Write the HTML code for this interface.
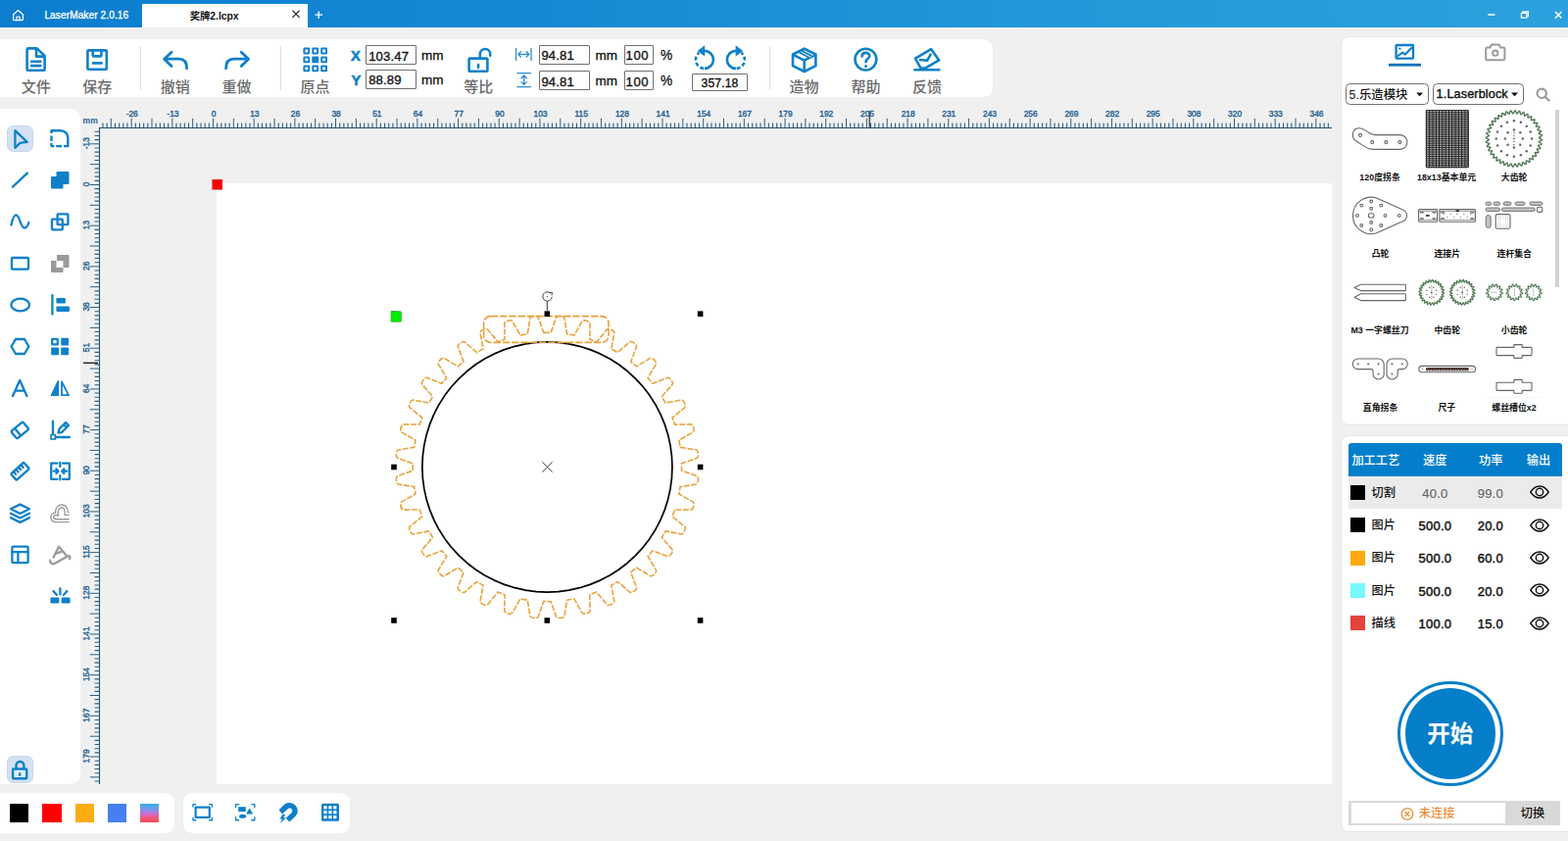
<!DOCTYPE html><html lang="zh"><head><meta charset="utf-8"><title>LaserMaker 2.0.16</title><style>
html,body{margin:0;padding:0}
body{width:1600px;height:858px;background:#f0f0f0;position:relative;overflow:hidden;font-family:"Liberation Sans",sans-serif;color:#000}
div,svg,span{position:absolute;box-sizing:border-box}
svg.t,svg.i{overflow:visible;display:block}
.tx{line-height:1.35;white-space:nowrap;overflow:visible;font-family:"Liberation Sans","Noto Sans CJK SC",sans-serif;font-weight:500}
#titlebar{left:0;top:0;width:1600px;height:28px;background:linear-gradient(90deg,#0c7dcf 0%,#1789d4 35%,#2499da 70%,#2ca1dd 100%)}
#tab{left:145px;top:4px;width:169px;height:24px;background:#fff}
#toolbar{left:0;top:40px;width:1012.8px;height:59px;background:#fff;border-radius:0 9.5px 9.5px 0}
.sep{width:1px;top:47px;height:45px;background:#dedede}
.inp{background:#fff;border:1px solid #707070;border-radius:1px;font-size:13.1px;line-height:1;color:#111;white-space:nowrap;-webkit-text-stroke:0.35px #111;letter-spacing:0.15px}
.inp span{position:absolute;top:4.2px}
.lbl{font-size:13.5px;line-height:1;color:#111;white-space:nowrap;-webkit-text-stroke:0.3px #111}
.xy{font-size:14.8px;font-weight:700;color:#0f80c8;line-height:1;-webkit-text-stroke:0.5px #0f80c8}
#leftbar{left:0;top:111px;width:81.8px;height:689.2px;background:#fff;border-radius:0 10px 10px 0}
#selbg{left:7px;top:127.6px;width:27px;height:27.2px;background:#d3e2f3;border:1px solid #c3d7ee;border-radius:6.5px}
#lockbg{left:7px;top:771.2px;width:27px;height:27.4px;background:#d3e2f3;border:1px solid #c3d7ee;border-radius:6.5px}
#page{left:221px;top:187px;width:1138px;height:613px;background:#fff}
#palette{left:0;top:809.2px;width:178.2px;height:40.8px;background:#fff;border-radius:0 9.5px 9.5px 0}
.sw{top:819.9px;width:19.2px;height:19.2px}
#btools{left:186.8px;top:809.2px;width:169.8px;height:40.8px;background:#fff;border-radius:9.5px}
#rp1{left:1369px;top:38.2px;width:232px;height:394.6px;background:#fff;border-radius:7px 0 0 7px;box-shadow:0 0 0 1px #e5e5e5}
#rp2{left:1369px;top:444.6px;width:232px;height:403.6px;background:#fff;border-radius:7px 0 0 7px;box-shadow:0 0 0 1px #e5e5e5}
.dd{top:85.2px;height:21.6px;border:1px solid #707070;border-radius:4.5px;background:#fff}
#thead{left:1376px;top:452px;width:217.8px;height:34px;background:#037ecb;border-radius:3px 3px 0 0}
#row1{left:1376px;top:486px;width:217.8px;height:32.8px;background:#ebebeb}
.csw{left:1378.2px;width:15px;height:15px}
.num{font-size:13px;line-height:1;color:#111;white-space:nowrap;transform:translateX(-50%);-webkit-text-stroke:0.45px #111;letter-spacing:0.2px}
#statusbar{left:1376.2px;top:817px;width:215.8px;height:25px;background:#d9d9d9}
#statusin{left:1378.6px;top:819.2px;width:157.4px;height:20.4px;background:#fff}
</style></head><body>
<div id="titlebar"></div><div id="tab"></div>
<svg class="i" style="left:10.6px;top:8.1px" width="15" height="15" viewBox="0 0 16 16"><path fill="none" stroke="#fff" stroke-width="1.3" stroke-linejoin="round" d="M2.8 7.2 L8 2.6 L13.2 7.2 V12.6 A0.8 0.8 0 0 1 12.4 13.4 H3.6 A0.8 0.8 0 0 1 2.8 12.6Z M6.4 13.2 V9.6 H9.6 V13.2"/></svg>
<span style="left:45.4px;top:11.4px;font-size:10.1px;line-height:1;color:#fff;white-space:nowrap;-webkit-text-stroke:0.3px #fff;letter-spacing:0.1px">LaserMaker 2.0.16</span>
<span class="tx" style="left:193.74px;top:10.00px;width:51.12px;height:13.91px;font-size:10.3px;color:#111;font-weight:700">奖牌2.lcpx</span>
<svg class="i" style="left:296px;top:8.4px" width="12" height="12" viewBox="0 0 12 12"><path stroke="#222" stroke-width="1.2" d="M2.4 2.6L9.6 9.8M9.6 2.6L2.4 9.8"/></svg>
<svg class="i" style="left:319px;top:9px" width="12" height="12" viewBox="0 0 12 12"><path stroke="#fff" stroke-width="1.3" d="M6.2 2.4V9.8M2.4 6.1H10"/></svg>
<svg class="i" style="left:1510px;top:6px" width="90" height="18" viewBox="1510 6 90 18"><path stroke="#fff" stroke-width="1.5" fill="none" d="M1518.2 15H1525.4"/><path stroke="#fff" stroke-width="1.2" fill="none" d="M1552.4 13.4H1557.8V18.2H1552.4ZM1554 13.2V11.8H1559.4V16.6H1558"/><path stroke="#fff" stroke-width="1.4" fill="none" d="M1587 12L1593.4 18.4M1593.4 12L1587 18.4"/></svg>
<div id="toolbar"></div>
<div class="sep" style="left:143px"></div>
<div class="sep" style="left:286px"></div>
<div class="sep" style="left:785.4px"></div>
<svg class="i" style="left:0;top:40px" width="1014" height="58" viewBox="0 40 1014 58"><path fill="none" stroke="#0f80c8" stroke-width="2.6" stroke-linecap="round" stroke-linejoin="round" d="M28.6 49.4 H37.6 L45.6 57 V70.8 A1 1 0 0 1 44.6 71.8 H28.6 A1 1 0 0 1 27.6 70.8 V50.4 A1 1 0 0 1 28.6 49.4 Z"/><path fill="none" stroke="#0f80c8" stroke-width="2.6" stroke-linecap="round" stroke-linejoin="round" stroke-width="2.4" d="M37 50 V57.6 H45"/><path fill="none" stroke="#0f80c8" stroke-width="2.6" stroke-linecap="round" stroke-linejoin="round" stroke-width="2.4" d="M32 62.7 H41.4 M32 67.1 H41.4"/><rect fill="none" stroke="#0f80c8" stroke-width="2.6" stroke-linecap="round" stroke-linejoin="round" x="89.4" y="51.4" width="19.4" height="19.4" rx="1"/><path fill="none" stroke="#0f80c8" stroke-width="2.6" stroke-linecap="round" stroke-linejoin="round" stroke-width="2.6" d="M94.7 52 V56.4 A1 1 0 0 0 95.7 57.4 H102.4 A1 1 0 0 0 103.4 56.4 V52"/><path fill="none" stroke="#0f80c8" stroke-width="2.6" stroke-linecap="round" stroke-linejoin="round" d="M95 64.4 H103.6"/><path fill="none" stroke="#0f80c8" stroke-width="2.8" stroke-linecap="round" stroke-linejoin="round" d="M175 53.2 L167.6 60.2 L175 67.6 M168.4 60.2 H182.6 C188 60.2 190.6 63.4 190.6 69.8"/><path fill="none" stroke="#0f80c8" stroke-width="2.8" stroke-linecap="round" stroke-linejoin="round" d="M246.2 53.2 L253.6 60.2 L246.2 67.6 M252.8 60.2 H238.6 C233.2 60.2 230.6 63.4 230.6 69.8"/><rect fill="none" stroke="#0f80c8" stroke-width="2" x="310.4" y="49.6" width="4.8" height="4.8" rx="0.3"/><rect fill="none" stroke="#0f80c8" stroke-width="2" x="319.3" y="49.6" width="4.8" height="4.8" rx="0.3"/><rect fill="none" stroke="#0f80c8" stroke-width="2" x="328.2" y="49.6" width="4.8" height="4.8" rx="0.3"/><rect fill="none" stroke="#0f80c8" stroke-width="2" x="310.4" y="58.5" width="4.8" height="4.8" rx="0.3"/><rect fill="#0f80c8" x="318.3" y="57.5" width="6.8" height="6.8" rx="0.5"/><rect fill="none" stroke="#0f80c8" stroke-width="2" x="328.2" y="58.5" width="4.8" height="4.8" rx="0.3"/><rect fill="none" stroke="#0f80c8" stroke-width="2" x="310.4" y="67.4" width="4.8" height="4.8" rx="0.3"/><rect fill="none" stroke="#0f80c8" stroke-width="2" x="319.3" y="67.4" width="4.8" height="4.8" rx="0.3"/><rect fill="none" stroke="#0f80c8" stroke-width="2" x="328.2" y="67.4" width="4.8" height="4.8" rx="0.3"/><rect fill="none" stroke="#0f80c8" stroke-width="2.6" stroke-linecap="round" stroke-linejoin="round" x="478.6" y="59.6" width="18.8" height="13.2" rx="0.8"/><path fill="none" stroke="#0f80c8" stroke-width="2.6" stroke-linecap="round" stroke-linejoin="round" d="M489.8 59 V55 A5.2 5.2 0 0 1 500.2 55.4 V56.8"/><path fill="none" stroke="#0f80c8" stroke-width="2.6" stroke-linecap="round" stroke-linejoin="round" stroke-width="2.4" d="M488 66 V69"/><path fill="none" stroke="#2b8ccb" stroke-width="1.3" stroke-linecap="round" stroke-linejoin="round" d="M526.5 49.4 V61.4 M542 49.4 V61.4 M528.8 55.4 H539.8 M531.4 52.8 L528.8 55.4 L531.4 58 M537.2 52.8 L539.8 55.4 L537.2 58"/><path fill="none" stroke="#2b8ccb" stroke-width="1.3" stroke-linecap="round" stroke-linejoin="round" d="M528 74.7 H541.4 M528 88.6 H541.4 M534.7 77 V86.4 M532 79.8 L534.7 77 L537.4 79.8 M532 83.6 L534.7 86.4 L537.4 83.6"/><path fill="none" stroke="#0f80c8" stroke-width="2.6" d="M718.90 51.90 A9.0 9.0 0 0 1 718.90 69.90"/><path fill="none" stroke="#0f80c8" stroke-width="2.6" stroke-dasharray="3.9 2.3" d="M718.12 69.87 A9.0 9.0 0 0 1 713.36 53.81"/><path fill="#0f80c8" d="M719.1999999999999 46.2 V57.4 L711.6 52 Z"/><path fill="none" stroke="#0f80c8" stroke-width="2.6" d="M750.90 51.90 A9.0 9.0 0 0 0 750.90 69.90"/><path fill="none" stroke="#0f80c8" stroke-width="2.6" stroke-dasharray="3.9 2.3" d="M751.68 69.87 A9.0 9.0 0 0 0 756.44 53.81"/><path fill="#0f80c8" d="M750.6 46.2 V57.4 L758.2 52 Z"/><path fill="none" stroke="#0f80c8" stroke-width="2.6" stroke-linecap="round" stroke-linejoin="round" d="M820.7 49.6 L832.4 55.5 V67.2 L820.7 73 L809 67.2 V55.5 Z M809.4 55.8 L820.7 61.6 L832 55.8 M820.7 61.8 V72.6"/><path fill="none" stroke="#0f80c8" stroke-width="2.2" stroke-linecap="round" d="M814.6 52.8 L826.4 58.8"/><path fill="#0f80c8" d="M815.6 52.4 L820.7 49.8 L831.4 55.2 L826.6 57.8 Z"/><path fill="none" stroke="#fff" stroke-width="1" d="M817.4 53 L827.4 58.2 M820.4 51.6 L830 56.4"/><circle fill="none" stroke="#0f80c8" stroke-width="2.6" stroke-linecap="round" stroke-linejoin="round" cx="883.4" cy="60.6" r="10.9"/><path fill="none" stroke="#0f80c8" stroke-width="2.6" stroke-linecap="round" stroke-linejoin="round" stroke-width="2.4" d="M879.6 57.4 C879.6 52.6 887.4 52.8 887.2 57.2 C887.1 59.8 883.6 60 883.5 63.2"/><circle fill="#0f80c8" cx="883.5" cy="67.4" r="1.5"/><path fill="none" stroke="#0f80c8" stroke-width="2.6" stroke-linecap="round" stroke-linejoin="round" d="M933.4 71.3 H958.2"/><path fill="none" stroke="#0f80c8" stroke-width="2.6" stroke-linecap="round" stroke-linejoin="round" d="M934 59.6 L950.2 50.2 L958.2 61.4 L944 69.6 L939.6 69.6 Z"/><path fill="none" stroke="#0f80c8" stroke-width="2.6" stroke-linecap="round" stroke-linejoin="round" stroke-width="2.2" d="M939 61 L946 61.8 L949.6 55.6"/></svg>
<span class="tx" style="left:21.80px;top:78.60px;width:30.00px;height:20.25px;font-size:15px;color:#6a6a6a">文件</span>
<span class="tx" style="left:84.20px;top:78.60px;width:30.00px;height:20.25px;font-size:15px;color:#6a6a6a">保存</span>
<span class="tx" style="left:163.80px;top:78.60px;width:30.00px;height:20.25px;font-size:15px;color:#6a6a6a">撤销</span>
<span class="tx" style="left:226.60px;top:78.60px;width:30.00px;height:20.25px;font-size:15px;color:#6a6a6a">重做</span>
<span class="tx" style="left:306.60px;top:78.60px;width:30.00px;height:20.25px;font-size:15px;color:#6a6a6a">原点</span>
<span class="tx" style="left:473.20px;top:78.60px;width:30.00px;height:20.25px;font-size:15px;color:#6a6a6a">等比</span>
<span class="tx" style="left:805.60px;top:78.60px;width:30.00px;height:20.25px;font-size:15px;color:#6a6a6a">造物</span>
<span class="tx" style="left:868.40px;top:78.60px;width:30.00px;height:20.25px;font-size:15px;color:#6a6a6a">帮助</span>
<span class="tx" style="left:931.00px;top:78.60px;width:30.00px;height:20.25px;font-size:15px;color:#6a6a6a">反馈</span>
<span class="xy" style="left:358px;top:50.1px">X</span><span class="xy" style="left:358.4px;top:74.7px">Y</span>
<div class="inp" style="left:373px;top:46px;width:52px;height:20px"><span style="left:2.2px;top:3.5px">103.47</span></div>
<div class="inp" style="left:373px;top:71px;width:52px;height:20px"><span style="left:2.2px;top:3.1px">88.89</span></div>
<span class="lbl" style="left:430px;top:50.2px">mm</span><span class="lbl" style="left:430px;top:75px">mm</span>
<div class="inp" style="left:550px;top:46px;width:52px;height:19.6px"><span style="left:1.4px;top:3.4px">94.81</span></div>
<div class="inp" style="left:550px;top:72px;width:52px;height:19.6px"><span style="left:1.4px;top:3.7px">94.81</span></div>
<span class="lbl" style="left:607.4px;top:50.2px">mm</span><span class="lbl" style="left:607.4px;top:76px">mm</span>
<div class="inp" style="left:636.8px;top:46px;width:30.6px;height:19.6px"><span style="left:0.8px;top:3.4px;letter-spacing:0.6px">100</span></div>
<div class="inp" style="left:636.8px;top:72px;width:30.6px;height:19.6px"><span style="left:0.8px;top:3.7px;letter-spacing:0.6px">100</span></div>
<span class="lbl" style="left:673.6px;top:48.4px;font-size:15.2px;transform:scaleX(0.9);transform-origin:0 0">%</span><span class="lbl" style="left:673.6px;top:74.2px;font-size:15.2px;transform:scaleX(0.9);transform-origin:0 0">%</span>
<div class="inp" style="left:706px;top:75.4px;width:57px;height:17.4px;font-size:12.2px;letter-spacing:0.1px"><span style="left:0;width:100%;text-align:center;top:2.6px">357.18</span></div>
<div id="leftbar"></div><div id="selbg"></div><div id="lockbg"></div>
<svg class="i" style="left:0;top:0" width="82" height="640" viewBox="0 0 82 640"><path fill="none" stroke="#0f80c8" stroke-width="2.3" stroke-linecap="round" stroke-linejoin="round" d="M15.4 133.2 L15.4 150.8 L20.2 146.2 Q20.8 145.7 21.6 145.6 L27.6 144.9 Z"/><path fill="none" stroke="#0f80c8" stroke-width="2.3" stroke-linecap="round" stroke-linejoin="round" d="M13 190.6 L27.8 176.6"/><path fill="none" stroke="#0f80c8" stroke-width="2.3" stroke-linecap="round" stroke-linejoin="round" d="M11.5 229.5 C13 222 14.5 219.3 16.5 219.3 C20 219.3 21 232.5 25 232.5 C27 232.5 28.5 230 29.4 227"/><rect fill="none" stroke="#0f80c8" stroke-width="2.3" stroke-linecap="round" stroke-linejoin="round" x="12" y="263" width="17" height="11.6" rx="0.8"/><ellipse fill="none" stroke="#0f80c8" stroke-width="2.3" stroke-linecap="round" stroke-linejoin="round" cx="20.7" cy="311" rx="9.3" ry="6.4"/><path fill="none" stroke="#0f80c8" stroke-width="2.3" stroke-linecap="round" stroke-linejoin="round" d="M11.6 353.5 L16 346 L25 346 L29.4 353.5 L25 361 L16 361 Z"/><path fill="none" stroke="#0f80c8" stroke-width="2.3" stroke-linecap="round" stroke-linejoin="round" d="M13 404 L20.2 388 L27.4 404 M15.6 398.6 L24.8 398.6"/><g transform="translate(20.3 439) rotate(-40)"><rect fill="none" stroke="#0f80c8" stroke-width="2.3" stroke-linecap="round" stroke-linejoin="round" x="-7.8" y="-4.9" width="15.6" height="9.8" rx="1.6"/><path fill="none" stroke="#0f80c8" stroke-width="2.3" stroke-linecap="round" stroke-linejoin="round" stroke-width="2" d="M-2.8 -4.5 V4.5"/></g><g transform="translate(20.5 480.8) rotate(-42)"><rect fill="none" stroke="#0f80c8" stroke-width="2.3" stroke-linecap="round" stroke-linejoin="round" x="-8.8" y="-4.3" width="17.6" height="8.6" rx="1"/><path fill="none" stroke="#0f80c8" stroke-width="2.3" stroke-linecap="round" stroke-linejoin="round" stroke-width="1.4" d="M-5.2 -4 V-0.8 M-1.8 -4 V-0.8 M1.6 -4 V-0.8 M5 -4 V-0.8"/></g><path fill="none" stroke="#0f80c8" stroke-width="2.3" stroke-linecap="round" stroke-linejoin="round" d="M20.5 514.6 L30 519.3 L20.5 524 L11 519.3 Z"/><path fill="none" stroke="#0f80c8" stroke-width="2.3" stroke-linecap="round" stroke-linejoin="round" d="M11 523.8 L20.5 528.5 L30 523.8 M11 528.2 L20.5 532.9 L30 528.2"/><rect fill="none" stroke="#0f80c8" stroke-width="2.3" stroke-linecap="round" stroke-linejoin="round" x="12.4" y="557.6" width="16.2" height="16.6" rx="1"/><path fill="none" stroke="#0f80c8" stroke-width="2.3" stroke-linecap="round" stroke-linejoin="round" d="M12.4 563.2 H28.6 M18.4 563.2 V574.2"/><path fill="none" stroke="#0f80c8" stroke-width="2.4" stroke-linejoin="round" d="M52.5 136 V133.2 H61.5 C66.5 133.2 69.3 136.5 69.3 141 V149.1 H65 M52.5 138.4 V144 M52.5 146 V149.1 H55.4 M57.2 149.1 H63.2"/><path fill="#0f80c8" d="M58.5 175 H69.5 A1 1 0 0 1 70.5 176 V187 A1 1 0 0 1 69.5 188 H64.5 V191.5 A1 1 0 0 1 63.5 192.5 H53 A1 1 0 0 1 52 191.5 V181 A1 1 0 0 1 53 180 H57.5 V176 A1 1 0 0 1 58.5 175 Z"/><rect fill="none" stroke="#0f80c8" stroke-width="2.3" stroke-linecap="round" stroke-linejoin="round" x="58.6" y="218.4" width="10.8" height="10.8" rx="0.8"/><rect fill="none" stroke="#0f80c8" stroke-width="2.3" stroke-linecap="round" stroke-linejoin="round" x="53" y="223.6" width="10.8" height="10.8" rx="0.8" /><path fill="#9a9a9a" d="M58 260 H69.5 A1 1 0 0 1 70.5 261 V272 A1 1 0 0 1 69.5 273 H64.5 V266 H58 Z"/><path fill="#9a9a9a" d="M52 266 H57.5 V273 H64.5 V277 A1 1 0 0 1 63.5 278 H53 A1 1 0 0 1 52 277 Z"/><path fill="none" stroke="#0f80c8" stroke-width="2.3" stroke-linecap="round" stroke-linejoin="round" d="M53.4 301.2 V320.6"/><rect fill="#0f80c8" x="57.4" y="304" width="9.4" height="5.6" rx="1.2"/><rect fill="#0f80c8" x="57.4" y="312.4" width="13.6" height="5.6" rx="1.2"/><rect fill="none" stroke="#0f80c8" stroke-width="2.3" stroke-linecap="round" stroke-linejoin="round" x="53.2" y="345.8" width="5.6" height="5.6" rx="0.5"/><rect fill="#0f80c8" x="62.2" y="344.8" width="7.8" height="7.6" rx="1"/><rect fill="#0f80c8" x="52.2" y="354.6" width="7.8" height="7.6" rx="1"/><rect fill="#0f80c8" x="62.2" y="354.6" width="7.8" height="7.6" rx="1"/><path fill="#0f80c8" stroke="#0f80c8" stroke-width="1.4" stroke-linejoin="round" d="M59.4 388.6 V403.4 H52.4 Z"/><path fill="none" stroke="#0f80c8" stroke-width="1.8" stroke-linejoin="round" d="M63 389.4 V403.2 H70 Z"/><path fill="none" stroke="#0f80c8" stroke-width="2.3" stroke-linecap="round" stroke-linejoin="round" d="M54 429.6 V446 H71"/><rect fill="#fff" stroke="#0f80c8" stroke-width="1.6" x="52" y="443.6" width="4.4" height="4.4"/><path fill="none" stroke="#0f80c8" stroke-width="2.3" stroke-linecap="round" stroke-linejoin="round" d="M59.6 441.6 L60.4 437.6 L67 431 L70 434 L63.4 440.8 Z M65 433 L68 436"/><path fill="none" stroke="#0f80c8" stroke-width="2.3" stroke-linecap="round" stroke-linejoin="round" d="M58.4 472.6 H52.2 V488.8 H58.4 M64 472.6 H70.8 V488.8 H64"/><path fill="none" stroke="#0f80c8" stroke-width="2.3" stroke-linecap="round" stroke-linejoin="round" stroke-width="1.5" d="M61.3 472 V476 M61.3 485.4 V489.4 M54.6 480.7 H59.4 M57.4 478.4 L59.6 480.7 L57.4 483 M68.2 480.7 H63.4 M65.4 478.4 L63.2 480.7 L65.4 483"/><path fill="none" stroke="#9a9a9a" stroke-width="1.4" stroke-linejoin="round" d="M70.6 532.6 H57 C53.8 532.6 51.8 530.4 51.8 527.8 C51.8 525 54 523.2 56.6 523.2 C56.2 518.6 59.2 515 62.8 515 C66.6 515 69.4 518 69.2 522.6 H70.6"/><path fill="none" stroke="#9a9a9a" stroke-width="1.4" stroke-linejoin="round" d="M70.6 529.8 H57.4 C55.6 529.8 54.6 528.8 54.6 527.6 C54.6 526.2 55.8 525.4 57.2 525.6 L59.4 526 C58.6 521.6 60.2 517.8 62.8 517.8 C65.4 517.8 67 520.8 66 525.4 H70.6"/><path fill="none" stroke="#9a9a9a" stroke-width="2.3" stroke-linecap="round" stroke-linejoin="round" stroke-width="1.7" d="M54.6 568.6 L60 557.8 L67.6 566.4 M56.6 564.8 L64 562.4"/><path fill="none" stroke="#9a9a9a" stroke-width="2.3" stroke-linecap="round" stroke-linejoin="round" stroke-width="1.7" d="M51.2 571.6 C51 575.4 54.2 576 56.6 574.6 L68.4 567.8 C70.8 566.4 72.4 568 71 570.2"/><rect fill="#0f80c8" x="51.4" y="609.6" width="9" height="6" rx="1.4"/><rect fill="#0f80c8" x="62.6" y="609.6" width="9" height="6" rx="1.4"/><path fill="none" stroke="#0f80c8" stroke-width="2.3" stroke-linecap="round" stroke-linejoin="round" d="M61.4 600.4 V606.4 M54.4 603 L58 607 M68.4 603 L64.8 607"/></svg>
<svg class="i" style="left:7px;top:771px" width="27" height="28" viewBox="7 771 27 28"><rect fill="#e2f0fb" stroke="#0f80c8" stroke-width="2.4" stroke-linejoin="round" x="13.1" y="784.5" width="14.1" height="9.8" rx="0.8"/><path fill="none" stroke="#0f80c8" stroke-width="2.4" d="M16.5 784V781A3.95 3.95 0 0 1 24.4 781V784"/><path stroke="#0f80c8" stroke-width="2.2" stroke-linecap="round" d="M20.2 789V791"/></svg>
<div id="page"></div>
<svg class="i" style="left:0;top:100px" width="1362" height="702" viewBox="0 100 1362 702"><g font-family="Liberation Sans, sans-serif" font-size="8.4" font-weight="400" fill="#2b6696" stroke="#2b6696" stroke-width="0.42"><path stroke="#2d5f82" stroke-width="1" fill="none" d="M113.30 120.8V130.5M134.14 120.8V130.5M154.98 120.8V130.5M175.82 120.8V130.5M196.66 120.8V130.5M217.50 120.8V130.5M238.34 120.8V130.5M259.18 120.8V130.5M280.02 120.8V130.5M300.86 120.8V130.5M321.70 120.8V130.5M342.54 120.8V130.5M363.38 120.8V130.5M384.22 120.8V130.5M405.06 120.8V130.5M425.90 120.8V130.5M446.74 120.8V130.5M467.58 120.8V130.5M488.42 120.8V130.5M509.26 120.8V130.5M530.10 120.8V130.5M550.94 120.8V130.5M571.78 120.8V130.5M592.62 120.8V130.5M613.46 120.8V130.5M634.30 120.8V130.5M655.14 120.8V130.5M675.98 120.8V130.5M696.82 120.8V130.5M717.66 120.8V130.5M738.50 120.8V130.5M759.34 120.8V130.5M780.18 120.8V130.5M801.02 120.8V130.5M821.86 120.8V130.5M842.70 120.8V130.5M863.54 120.8V130.5M884.38 120.8V130.5M905.22 120.8V130.5M926.06 120.8V130.5M946.90 120.8V130.5M967.74 120.8V130.5M988.58 120.8V130.5M1009.42 120.8V130.5M1030.26 120.8V130.5M1051.10 120.8V130.5M1071.94 120.8V130.5M1092.78 120.8V130.5M1113.62 120.8V130.5M1134.46 120.8V130.5M1155.30 120.8V130.5M1176.14 120.8V130.5M1196.98 120.8V130.5M1217.82 120.8V130.5M1238.66 120.8V130.5M1259.50 120.8V130.5M1280.34 120.8V130.5M1301.18 120.8V130.5M1322.02 120.8V130.5M1342.86 120.8V130.5"/><path stroke="#2d5f82" stroke-width="1.1" fill="none" d="M104.96 125.6V130.5M109.13 125.6V130.5M117.47 125.6V130.5M121.64 125.6V130.5M125.80 125.6V130.5M129.97 125.6V130.5M138.31 125.6V130.5M142.48 125.6V130.5M146.64 125.6V130.5M150.81 125.6V130.5M159.15 125.6V130.5M163.32 125.6V130.5M167.48 125.6V130.5M171.65 125.6V130.5M179.99 125.6V130.5M184.16 125.6V130.5M188.32 125.6V130.5M192.49 125.6V130.5M200.83 125.6V130.5M205.00 125.6V130.5M209.16 125.6V130.5M213.33 125.6V130.5M221.67 125.6V130.5M225.84 125.6V130.5M230.00 125.6V130.5M234.17 125.6V130.5M242.51 125.6V130.5M246.68 125.6V130.5M250.84 125.6V130.5M255.01 125.6V130.5M263.35 125.6V130.5M267.52 125.6V130.5M271.68 125.6V130.5M275.85 125.6V130.5M284.19 125.6V130.5M288.36 125.6V130.5M292.52 125.6V130.5M296.69 125.6V130.5M305.03 125.6V130.5M309.20 125.6V130.5M313.36 125.6V130.5M317.53 125.6V130.5M325.87 125.6V130.5M330.04 125.6V130.5M334.20 125.6V130.5M338.37 125.6V130.5M346.71 125.6V130.5M350.88 125.6V130.5M355.04 125.6V130.5M359.21 125.6V130.5M367.55 125.6V130.5M371.72 125.6V130.5M375.88 125.6V130.5M380.05 125.6V130.5M388.39 125.6V130.5M392.56 125.6V130.5M396.72 125.6V130.5M400.89 125.6V130.5M409.23 125.6V130.5M413.40 125.6V130.5M417.56 125.6V130.5M421.73 125.6V130.5M430.07 125.6V130.5M434.24 125.6V130.5M438.40 125.6V130.5M442.57 125.6V130.5M450.91 125.6V130.5M455.08 125.6V130.5M459.24 125.6V130.5M463.41 125.6V130.5M471.75 125.6V130.5M475.92 125.6V130.5M480.08 125.6V130.5M484.25 125.6V130.5M492.59 125.6V130.5M496.76 125.6V130.5M500.92 125.6V130.5M505.09 125.6V130.5M513.43 125.6V130.5M517.60 125.6V130.5M521.76 125.6V130.5M525.93 125.6V130.5M534.27 125.6V130.5M538.44 125.6V130.5M542.60 125.6V130.5M546.77 125.6V130.5M555.11 125.6V130.5M559.28 125.6V130.5M563.44 125.6V130.5M567.61 125.6V130.5M575.95 125.6V130.5M580.12 125.6V130.5M584.28 125.6V130.5M588.45 125.6V130.5M596.79 125.6V130.5M600.96 125.6V130.5M605.12 125.6V130.5M609.29 125.6V130.5M617.63 125.6V130.5M621.80 125.6V130.5M625.96 125.6V130.5M630.13 125.6V130.5M638.47 125.6V130.5M642.64 125.6V130.5M646.80 125.6V130.5M650.97 125.6V130.5M659.31 125.6V130.5M663.48 125.6V130.5M667.64 125.6V130.5M671.81 125.6V130.5M680.15 125.6V130.5M684.32 125.6V130.5M688.48 125.6V130.5M692.65 125.6V130.5M700.99 125.6V130.5M705.16 125.6V130.5M709.32 125.6V130.5M713.49 125.6V130.5M721.83 125.6V130.5M726.00 125.6V130.5M730.16 125.6V130.5M734.33 125.6V130.5M742.67 125.6V130.5M746.84 125.6V130.5M751.00 125.6V130.5M755.17 125.6V130.5M763.51 125.6V130.5M767.68 125.6V130.5M771.84 125.6V130.5M776.01 125.6V130.5M784.35 125.6V130.5M788.52 125.6V130.5M792.68 125.6V130.5M796.85 125.6V130.5M805.19 125.6V130.5M809.36 125.6V130.5M813.52 125.6V130.5M817.69 125.6V130.5M826.03 125.6V130.5M830.20 125.6V130.5M834.36 125.6V130.5M838.53 125.6V130.5M846.87 125.6V130.5M851.04 125.6V130.5M855.20 125.6V130.5M859.37 125.6V130.5M867.71 125.6V130.5M871.88 125.6V130.5M876.04 125.6V130.5M880.21 125.6V130.5M888.55 125.6V130.5M892.72 125.6V130.5M896.88 125.6V130.5M901.05 125.6V130.5M909.39 125.6V130.5M913.56 125.6V130.5M917.72 125.6V130.5M921.89 125.6V130.5M930.23 125.6V130.5M934.40 125.6V130.5M938.56 125.6V130.5M942.73 125.6V130.5M951.07 125.6V130.5M955.24 125.6V130.5M959.40 125.6V130.5M963.57 125.6V130.5M971.91 125.6V130.5M976.08 125.6V130.5M980.24 125.6V130.5M984.41 125.6V130.5M992.75 125.6V130.5M996.92 125.6V130.5M1001.08 125.6V130.5M1005.25 125.6V130.5M1013.59 125.6V130.5M1017.76 125.6V130.5M1021.92 125.6V130.5M1026.09 125.6V130.5M1034.43 125.6V130.5M1038.60 125.6V130.5M1042.76 125.6V130.5M1046.93 125.6V130.5M1055.27 125.6V130.5M1059.44 125.6V130.5M1063.60 125.6V130.5M1067.77 125.6V130.5M1076.11 125.6V130.5M1080.28 125.6V130.5M1084.44 125.6V130.5M1088.61 125.6V130.5M1096.95 125.6V130.5M1101.12 125.6V130.5M1105.28 125.6V130.5M1109.45 125.6V130.5M1117.79 125.6V130.5M1121.96 125.6V130.5M1126.12 125.6V130.5M1130.29 125.6V130.5M1138.63 125.6V130.5M1142.80 125.6V130.5M1146.96 125.6V130.5M1151.13 125.6V130.5M1159.47 125.6V130.5M1163.64 125.6V130.5M1167.80 125.6V130.5M1171.97 125.6V130.5M1180.31 125.6V130.5M1184.48 125.6V130.5M1188.64 125.6V130.5M1192.81 125.6V130.5M1201.15 125.6V130.5M1205.32 125.6V130.5M1209.48 125.6V130.5M1213.65 125.6V130.5M1221.99 125.6V130.5M1226.16 125.6V130.5M1230.32 125.6V130.5M1234.49 125.6V130.5M1242.83 125.6V130.5M1247.00 125.6V130.5M1251.16 125.6V130.5M1255.33 125.6V130.5M1263.67 125.6V130.5M1267.84 125.6V130.5M1272.00 125.6V130.5M1276.17 125.6V130.5M1284.51 125.6V130.5M1288.68 125.6V130.5M1292.84 125.6V130.5M1297.01 125.6V130.5M1305.35 125.6V130.5M1309.52 125.6V130.5M1313.68 125.6V130.5M1317.85 125.6V130.5M1326.19 125.6V130.5M1330.36 125.6V130.5M1334.52 125.6V130.5M1338.69 125.6V130.5M1347.03 125.6V130.5M1351.20 125.6V130.5M1355.36 125.6V130.5"/><path stroke="#2d5f82" stroke-width="1" fill="none" d="M91.8 146.82H101.5M91.8 167.66H101.5M91.8 188.50H101.5M91.8 209.34H101.5M91.8 230.18H101.5M91.8 251.02H101.5M91.8 271.86H101.5M91.8 292.70H101.5M91.8 313.54H101.5M91.8 334.38H101.5M91.8 355.22H101.5M91.8 376.06H101.5M91.8 396.90H101.5M91.8 417.74H101.5M91.8 438.58H101.5M91.8 459.42H101.5M91.8 480.26H101.5M91.8 501.10H101.5M91.8 521.94H101.5M91.8 542.78H101.5M91.8 563.62H101.5M91.8 584.46H101.5M91.8 605.30H101.5M91.8 626.14H101.5M91.8 646.98H101.5M91.8 667.82H101.5M91.8 688.66H101.5M91.8 709.50H101.5M91.8 730.34H101.5M91.8 751.18H101.5M91.8 772.02H101.5M91.8 792.86H101.5"/><path stroke="#2d5f82" stroke-width="1.1" fill="none" d="M96.6 134.32H101.5M96.6 138.48H101.5M96.6 142.65H101.5M96.6 150.99H101.5M96.6 155.16H101.5M96.6 159.32H101.5M96.6 163.49H101.5M96.6 171.83H101.5M96.6 176.00H101.5M96.6 180.16H101.5M96.6 184.33H101.5M96.6 192.67H101.5M96.6 196.84H101.5M96.6 201.00H101.5M96.6 205.17H101.5M96.6 213.51H101.5M96.6 217.68H101.5M96.6 221.84H101.5M96.6 226.01H101.5M96.6 234.35H101.5M96.6 238.52H101.5M96.6 242.68H101.5M96.6 246.85H101.5M96.6 255.19H101.5M96.6 259.36H101.5M96.6 263.52H101.5M96.6 267.69H101.5M96.6 276.03H101.5M96.6 280.20H101.5M96.6 284.36H101.5M96.6 288.53H101.5M96.6 296.87H101.5M96.6 301.04H101.5M96.6 305.20H101.5M96.6 309.37H101.5M96.6 317.71H101.5M96.6 321.88H101.5M96.6 326.04H101.5M96.6 330.21H101.5M96.6 338.55H101.5M96.6 342.72H101.5M96.6 346.88H101.5M96.6 351.05H101.5M96.6 359.39H101.5M96.6 363.56H101.5M96.6 367.72H101.5M96.6 371.89H101.5M96.6 380.23H101.5M96.6 384.40H101.5M96.6 388.56H101.5M96.6 392.73H101.5M96.6 401.07H101.5M96.6 405.24H101.5M96.6 409.40H101.5M96.6 413.57H101.5M96.6 421.91H101.5M96.6 426.08H101.5M96.6 430.24H101.5M96.6 434.41H101.5M96.6 442.75H101.5M96.6 446.92H101.5M96.6 451.08H101.5M96.6 455.25H101.5M96.6 463.59H101.5M96.6 467.76H101.5M96.6 471.92H101.5M96.6 476.09H101.5M96.6 484.43H101.5M96.6 488.60H101.5M96.6 492.76H101.5M96.6 496.93H101.5M96.6 505.27H101.5M96.6 509.44H101.5M96.6 513.60H101.5M96.6 517.77H101.5M96.6 526.11H101.5M96.6 530.28H101.5M96.6 534.44H101.5M96.6 538.61H101.5M96.6 546.95H101.5M96.6 551.12H101.5M96.6 555.28H101.5M96.6 559.45H101.5M96.6 567.79H101.5M96.6 571.96H101.5M96.6 576.12H101.5M96.6 580.29H101.5M96.6 588.63H101.5M96.6 592.80H101.5M96.6 596.96H101.5M96.6 601.13H101.5M96.6 609.47H101.5M96.6 613.64H101.5M96.6 617.80H101.5M96.6 621.97H101.5M96.6 630.31H101.5M96.6 634.48H101.5M96.6 638.64H101.5M96.6 642.81H101.5M96.6 651.15H101.5M96.6 655.32H101.5M96.6 659.48H101.5M96.6 663.65H101.5M96.6 671.99H101.5M96.6 676.16H101.5M96.6 680.32H101.5M96.6 684.49H101.5M96.6 692.83H101.5M96.6 697.00H101.5M96.6 701.16H101.5M96.6 705.33H101.5M96.6 713.67H101.5M96.6 717.84H101.5M96.6 722.00H101.5M96.6 726.17H101.5M96.6 734.51H101.5M96.6 738.68H101.5M96.6 742.84H101.5M96.6 747.01H101.5M96.6 755.35H101.5M96.6 759.52H101.5M96.6 763.68H101.5M96.6 767.85H101.5M96.6 776.19H101.5M96.6 780.36H101.5M96.6 784.52H101.5M96.6 788.69H101.5M96.6 797.03H101.5"/><path stroke="#274f6c" stroke-width="1.1" fill="none" d="M101.5 800V130.5H1359"/><path stroke="#dceef7" stroke-width="0.8" fill="none" d="M102.6 800V131.6H1359"/><text x="134.7" y="118.8" text-anchor="middle">-26</text><text x="176.4" y="118.8" text-anchor="middle">-13</text><text x="218.1" y="118.8" text-anchor="middle">0</text><text x="259.8" y="118.8" text-anchor="middle">13</text><text x="301.5" y="118.8" text-anchor="middle">26</text><text x="343.1" y="118.8" text-anchor="middle">38</text><text x="384.8" y="118.8" text-anchor="middle">51</text><text x="426.5" y="118.8" text-anchor="middle">64</text><text x="468.2" y="118.8" text-anchor="middle">77</text><text x="509.9" y="118.8" text-anchor="middle">90</text><text x="551.5" y="118.8" text-anchor="middle">103</text><text x="593.2" y="118.8" text-anchor="middle">115</text><text x="634.9" y="118.8" text-anchor="middle">128</text><text x="676.6" y="118.8" text-anchor="middle">141</text><text x="718.3" y="118.8" text-anchor="middle">154</text><text x="759.9" y="118.8" text-anchor="middle">167</text><text x="801.6" y="118.8" text-anchor="middle">179</text><text x="843.3" y="118.8" text-anchor="middle">192</text><text x="885.0" y="118.8" text-anchor="middle">205</text><text x="926.7" y="118.8" text-anchor="middle">218</text><text x="968.3" y="118.8" text-anchor="middle">231</text><text x="1010.0" y="118.8" text-anchor="middle">243</text><text x="1051.7" y="118.8" text-anchor="middle">256</text><text x="1093.4" y="118.8" text-anchor="middle">269</text><text x="1135.1" y="118.8" text-anchor="middle">282</text><text x="1176.7" y="118.8" text-anchor="middle">295</text><text x="1218.4" y="118.8" text-anchor="middle">308</text><text x="1260.1" y="118.8" text-anchor="middle">320</text><text x="1301.8" y="118.8" text-anchor="middle">333</text><text x="1343.5" y="118.8" text-anchor="middle">346</text><text transform="translate(90.6 146.2) rotate(-90)" text-anchor="middle">-13</text><text transform="translate(90.6 187.9) rotate(-90)" text-anchor="middle">0</text><text transform="translate(90.6 229.6) rotate(-90)" text-anchor="middle">13</text><text transform="translate(90.6 271.3) rotate(-90)" text-anchor="middle">26</text><text transform="translate(90.6 312.9) rotate(-90)" text-anchor="middle">38</text><text transform="translate(90.6 354.6) rotate(-90)" text-anchor="middle">51</text><text transform="translate(90.6 396.3) rotate(-90)" text-anchor="middle">64</text><text transform="translate(90.6 438.0) rotate(-90)" text-anchor="middle">77</text><text transform="translate(90.6 479.7) rotate(-90)" text-anchor="middle">90</text><text transform="translate(90.6 521.3) rotate(-90)" text-anchor="middle">103</text><text transform="translate(90.6 563.0) rotate(-90)" text-anchor="middle">115</text><text transform="translate(90.6 604.7) rotate(-90)" text-anchor="middle">128</text><text transform="translate(90.6 646.4) rotate(-90)" text-anchor="middle">141</text><text transform="translate(90.6 688.1) rotate(-90)" text-anchor="middle">154</text><text transform="translate(90.6 729.7) rotate(-90)" text-anchor="middle">167</text><text transform="translate(90.6 771.4) rotate(-90)" text-anchor="middle">179</text><text x="84.6" y="125.9" style="font-size:8.6px;font-weight:700" stroke="none">mm</text><path stroke="#555" stroke-width="1.6" d="M887.3 113.4V130"/><path stroke="#222" stroke-width="1.4" d="M85 370.3H100"/></g></svg>
<svg class="i" style="left:200px;top:170px" width="1170" height="640" viewBox="200 170 1170 640"><path fill="none" stroke="#000" stroke-width="1.7" stroke-linejoin="round" d="M558.40 604.05L547.28 603.56L536.25 602.11L525.39 599.70L514.78 596.36L504.50 592.10L494.62 586.96L485.24 580.98L476.41 574.21L468.21 566.69L460.69 558.49L453.92 549.66L447.94 540.27L442.80 530.40L438.54 520.12L435.20 509.51L432.79 498.65L431.34 487.62L430.85 476.50L431.34 465.38L432.79 454.35L435.20 443.49L438.54 432.88L442.80 422.60L447.94 412.72L453.92 403.34L460.69 394.51L468.21 386.31L476.41 378.79L485.24 372.02L494.62 366.04L504.50 360.90L514.78 356.64L525.39 353.30L536.25 350.89L547.28 349.44L558.40 348.95L569.52 349.44L580.55 350.89L591.41 353.30L602.02 356.64L612.30 360.90L622.17 366.04L631.56 372.02L640.39 378.79L648.59 386.31L656.11 394.51L662.88 403.34L668.86 412.72L674.00 422.60L678.26 432.88L681.60 443.49L684.01 454.35L685.46 465.38L685.95 476.50L685.46 487.62L684.01 498.65L681.60 509.51L678.26 520.12L674.00 530.40L668.86 540.27L662.88 549.66L656.11 558.49L648.59 566.69L640.39 574.21L631.56 580.98L622.17 586.96L612.30 592.10L602.02 596.36L591.41 599.70L580.55 602.11L569.52 603.56Z"/><path fill="none" stroke="#e8a33c" stroke-width="1.6" stroke-dasharray="6 1.5" stroke-linejoin="round" d="M554.69 339.35L562.11 339.35L567.61 323.68C568.41 321.77 575.41 322.39 575.86 324.40L578.56 340.79L585.87 342.08L594.01 327.60C595.12 325.86 601.92 327.68 602.01 329.74L601.82 346.35L608.80 348.89L619.33 336.04C620.72 334.53 627.10 337.50 626.83 339.55L623.76 355.87L630.19 359.58L642.79 348.76C644.43 347.51 650.19 351.54 649.57 353.51L643.72 369.05L649.40 373.82L663.69 365.35C665.52 364.40 670.50 369.38 669.55 371.21L661.08 385.50L665.85 391.18L681.39 385.33C683.36 384.71 687.39 390.47 686.14 392.11L675.32 404.71L679.03 411.14L695.35 408.07C697.40 407.80 700.37 414.18 698.86 415.57L686.01 426.10L688.55 433.08L705.16 432.89C707.22 432.98 709.04 439.78 707.30 440.89L692.82 449.03L694.11 456.34L710.50 459.04C712.51 459.49 713.13 466.49 711.22 467.29L695.55 472.79L695.55 480.21L711.22 485.71C713.13 486.51 712.51 493.51 710.50 493.96L694.11 496.66L692.82 503.97L707.30 512.11C709.04 513.22 707.22 520.02 705.16 520.11L688.55 519.92L686.01 526.90L698.86 537.43C700.37 538.82 697.40 545.20 695.35 544.93L679.03 541.86L675.32 548.29L686.14 560.89C687.39 562.53 683.36 568.29 681.39 567.67L665.85 561.82L661.08 567.50L669.55 581.79C670.50 583.62 665.52 588.60 663.69 587.65L649.40 579.18L643.72 583.95L649.57 599.49C650.19 601.46 644.43 605.49 642.79 604.24L630.19 593.42L623.76 597.13L626.83 613.45C627.10 615.50 620.72 618.47 619.33 616.96L608.80 604.11L601.82 606.65L602.01 623.26C601.92 625.32 595.12 627.14 594.01 625.40L585.87 610.92L578.56 612.21L575.86 628.60C575.41 630.61 568.41 631.23 567.61 629.32L562.11 613.65L554.69 613.65L549.19 629.32C548.39 631.23 541.39 630.61 540.94 628.60L538.24 612.21L530.93 610.92L522.79 625.40C521.68 627.14 514.88 625.32 514.79 623.26L514.98 606.65L508.00 604.11L497.47 616.96C496.08 618.47 489.70 615.50 489.97 613.45L493.04 597.13L486.61 593.42L474.01 604.24C472.37 605.49 466.61 601.46 467.23 599.49L473.08 583.95L467.40 579.18L453.11 587.65C451.28 588.60 446.30 583.62 447.25 581.79L455.72 567.50L450.95 561.82L435.41 567.67C433.44 568.29 429.41 562.53 430.66 560.89L441.48 548.29L437.77 541.86L421.45 544.93C419.40 545.20 416.43 538.82 417.94 537.43L430.79 526.90L428.25 519.92L411.64 520.11C409.58 520.02 407.76 513.22 409.50 512.11L423.98 503.97L422.69 496.66L406.30 493.96C404.29 493.51 403.67 486.51 405.58 485.71L421.25 480.21L421.25 472.79L405.58 467.29C403.67 466.49 404.29 459.49 406.30 459.04L422.69 456.34L423.98 449.03L409.50 440.89C407.76 439.78 409.58 432.98 411.64 432.89L428.25 433.08L430.79 426.10L417.94 415.57C416.43 414.18 419.40 407.80 421.45 408.07L437.77 411.14L441.48 404.71L430.66 392.11C429.41 390.47 433.44 384.71 435.41 385.33L450.95 391.18L455.72 385.50L447.25 371.21C446.30 369.38 451.28 364.40 453.11 365.35L467.40 373.82L473.08 369.05L467.23 353.51C466.61 351.54 472.37 347.51 474.01 348.76L486.61 359.58L493.04 355.87L489.97 339.55C489.70 337.50 496.08 334.53 497.47 336.04L508.00 348.89L514.98 346.35L514.79 329.74C514.88 327.68 521.68 325.86 522.79 327.60L530.93 342.08L538.24 340.79L540.94 324.40C541.39 322.39 548.39 321.77 549.19 323.68L554.69 339.35Z"/><rect fill="none" stroke="#e8a33c" stroke-width="1.6" stroke-dasharray="7.5 1.8" x="493.6" y="322.6" width="127.4" height="26.8" rx="7"/><path stroke="#333" stroke-width="0.9" d="M553.2 471.3L563.6 481.7M563.6 471.3L553.2 481.7"/><rect fill="#000" x="399.2" y="317.4" width="5.6" height="5.6"/><rect fill="#000" x="555.5" y="317.4" width="5.6" height="5.6"/><rect fill="#000" x="711.8" y="317.4" width="5.6" height="5.6"/><rect fill="#000" x="399.2" y="473.7" width="5.6" height="5.6"/><rect fill="#000" x="711.8" y="473.7" width="5.6" height="5.6"/><rect fill="#000" x="399.2" y="630.2" width="5.6" height="5.6"/><rect fill="#000" x="555.5" y="630.2" width="5.6" height="5.6"/><rect fill="#000" x="711.8" y="630.2" width="5.6" height="5.6"/><path stroke="#333" stroke-width="1" d="M558.3 307.4V317.6"/><path fill="none" stroke="#444" stroke-width="1" d="M561.9 299.2A4.7 4.7 0 1 0 563.2 302.8"/><path fill="none" stroke="#444" stroke-width="1" d="M560.2 298.6L563.4 298.2L563 301.4"/><circle fill="#666" cx="558.5" cy="302.4" r="0.6"/><rect fill="#00ee00" stroke="#3fae3f" stroke-width="0.8" x="399" y="317.7" width="10.4" height="10.6" rx="0.8"/><rect fill="#ff0000" stroke="#e02020" stroke-width="0.6" x="216.8" y="183.2" width="10" height="10"/></svg>
<div id="palette"></div>
<div class="sw" style="left:10.2px;background:#000"></div>
<div class="sw" style="left:43.4px;background:#ff0000"></div>
<div class="sw" style="left:76.8px;background:#ffab12"></div>
<div class="sw" style="left:110px;background:#4680f0"></div>
<div class="sw" style="left:143px;background:linear-gradient(180deg,#33ade8 0%,#6d9ce8 25%,#b47ae4 48%,#d868c0 58%,#ee587c 75%,#f0505a 100%)"></div>
<div id="btools"></div>
<svg class="i" style="left:186px;top:809px" width="172" height="41" viewBox="186 809 172 41"><rect fill="none" stroke="#0f80c8" stroke-linecap="round" stroke-linejoin="round" stroke-width="2.2" x="199.6" y="823.6" width="14.2" height="10.2"/><path fill="none" stroke="#0f80c8" stroke-linecap="round" stroke-linejoin="round" stroke-width="1.4" d="M197 823V820.6H199.8 M213.6 820.6H216.4V823 M197 834.4V836.8H199.8 M213.6 836.8H216.4V834.4"/><path fill="none" stroke="#0f80c8" stroke-linecap="round" stroke-linejoin="round" stroke-width="1.4" d="M240.6 823.6V820.6H243.6 M256.8 820.6H259.8V823.6 M240.6 833.8V836.8H243.6 M256.8 836.8H259.8V833.8"/><rect fill="#0f80c8" x="243.2" y="823.2" width="7.6" height="4.8"/><path fill="#0f80c8" d="M254.6 824.6L258.2 830.6H251Z"/><ellipse fill="#0f80c8" cx="247.6" cy="832.8" rx="3.6" ry="2"/><path fill="#0f80c8" d="M284.6 826.2 L290.2 820.8 C294.6 817.2 301.8 819.4 303.4 825 C304.4 828.6 303.2 831.2 301 833.2 L295.4 838.6 L291.6 834.8 L297.2 829.4 C299.4 827.4 298 824.4 295.6 824.4 C294.6 824.4 294 824.8 293.4 825.4 L288 830.6 Z"/><path fill="#0f80c8" d="M288.6 830.8 L285.4 835.6 H288 L286 840 L291.8 834.2 H289.2 L291.2 830.8Z"/><rect fill="#0f80c8" x="328" y="819.8" width="18" height="18" rx="1.6"/><rect fill="#fff" x="330.4" y="822.2" width="3.2" height="3.2"/><rect fill="#fff" x="335.3" y="822.2" width="3.2" height="3.2"/><rect fill="#fff" x="340.2" y="822.2" width="3.2" height="3.2"/><rect fill="#fff" x="330.4" y="827.1" width="3.2" height="3.2"/><rect fill="#fff" x="335.3" y="827.1" width="3.2" height="3.2"/><rect fill="#fff" x="340.2" y="827.1" width="3.2" height="3.2"/><rect fill="#fff" x="330.4" y="832.0" width="3.2" height="3.2"/><rect fill="#fff" x="335.3" y="832.0" width="3.2" height="3.2"/><rect fill="#fff" x="340.2" y="832.0" width="3.2" height="3.2"/></svg>
<div id="rp1"></div>
<svg class="i" style="left:1410px;top:40px" width="180" height="70" viewBox="1410 40 180 70"><rect fill="none" stroke="#0f80c8" stroke-linecap="round" stroke-linejoin="round" stroke-width="2.4" x="1424.6" y="46" width="17.4" height="13.6" rx="0.8"/><circle fill="#0f80c8" cx="1428.4" cy="49.6" r="1.2"/><path fill="none" stroke="#0f80c8" stroke-linecap="round" stroke-linejoin="round" stroke-width="2.1" d="M1426.4 57 L1431.2 53.6 L1433.8 55.6 L1440.6 48.8"/><rect fill="#0a70b6" x="1417" y="64.8" width="33" height="2.8"/><path fill="none" stroke="#9a9a9a" stroke-width="2" stroke-linejoin="round" d="M1517.6 48.4 H1520.6 L1522 45.4 H1529.6 L1531 48.4 H1534 A1.4 1.4 0 0 1 1535.4 49.8 V59.8 A1.4 1.4 0 0 1 1534 61.2 H1517.6 A1.4 1.4 0 0 1 1516.2 59.8 V49.8 A1.4 1.4 0 0 1 1517.6 48.4Z"/><circle fill="none" stroke="#9a9a9a" stroke-width="1.8" cx="1525.8" cy="54.2" r="2.7"/><circle fill="none" stroke="#9a9a9a" stroke-width="2.1" cx="1573.2" cy="95.3" r="4.7"/><path stroke="#9a9a9a" stroke-width="2.2" stroke-linecap="round" d="M1577 99.2L1580.6 102.4"/></svg>
<div class="dd" style="left:1373.2px;width:84.4px"></div><div class="dd" style="left:1462px;width:92.8px"></div>
<span class="tx" style="left:1376.60px;top:88.60px;width:60.36px;height:16.74px;font-size:12.4px;color:#111">5.乐造模块</span>
<span style="left:1465.6px;top:90px;width:73px;height:14px;overflow:hidden;font-size:12.6px;line-height:1;white-space:nowrap;color:#111;-webkit-text-stroke:0.4px #111;letter-spacing:0.15px">1.Laserblock</span>
<svg class="i" style="left:1440px;top:90px" width="115" height="12" viewBox="1440 90 115 12"><path fill="#111" d="M1445.2 94.6H1452L1448.6 98.2Z M1542 94.6H1549L1545.5 98.2Z"/></svg>
<div style="left:1587px;top:112.2px;width:3.8px;height:181px;background:#d3d3d3"></div>
<svg class="i" style="left:1370px;top:108px" width="230" height="300" viewBox="1370 108 230 300"><path fill="none" stroke="#666" stroke-width="1.1" stroke-linejoin="round" d="M1385.6 130.8 C1389.5 130.2 1392 131.8 1395.5 134.4 C1398.5 136.6 1400 137.6 1403 137.6 H1428.6 A7.4 7.4 0 0 1 1428.6 152.4 H1400.6 C1397.4 152.4 1395.4 151.4 1392.6 149.6 L1383.6 143.8 C1378.8 140.6 1379.4 132 1385.6 130.8Z"/><circle fill="none" stroke="#666" stroke-width="1.1" stroke-linejoin="round" cx="1388" cy="137.9" r="1.5"/><circle fill="none" stroke="#666" stroke-width="1.1" stroke-linejoin="round" cx="1400.2" cy="145.1" r="1.5"/><circle fill="none" stroke="#666" stroke-width="1.1" stroke-linejoin="round" cx="1414.3" cy="145.1" r="1.5"/><circle fill="none" stroke="#666" stroke-width="1.1" stroke-linejoin="round" cx="1428.4" cy="145.1" r="1.5"/><rect x="1455.4" y="112.5" width="42.8" height="58.2" rx="1.2" fill="#cfd1cf"/><path stroke="#1e1e1e" stroke-width="1.05" fill="none" d="M1455.40 112.5V170.7M1458.69 112.5V170.7M1461.98 112.5V170.7M1465.28 112.5V170.7M1468.57 112.5V170.7M1471.86 112.5V170.7M1475.15 112.5V170.7M1478.45 112.5V170.7M1481.74 112.5V170.7M1485.03 112.5V170.7M1488.32 112.5V170.7M1491.62 112.5V170.7M1494.91 112.5V170.7M1498.20 112.5V170.7"/><path stroke="#1e1e1e" stroke-width="0.95" fill="none" d="M1455.4 112.50H1498.2M1455.4 114.74H1498.2M1455.4 116.98H1498.2M1455.4 119.22H1498.2M1455.4 121.45H1498.2M1455.4 123.69H1498.2M1455.4 125.93H1498.2M1455.4 128.17H1498.2M1455.4 130.41H1498.2M1455.4 132.65H1498.2M1455.4 134.88H1498.2M1455.4 137.12H1498.2M1455.4 139.36H1498.2M1455.4 141.60H1498.2M1455.4 143.84H1498.2M1455.4 146.08H1498.2M1455.4 148.32H1498.2M1455.4 150.55H1498.2M1455.4 152.79H1498.2M1455.4 155.03H1498.2M1455.4 157.27H1498.2M1455.4 159.51H1498.2M1455.4 161.75H1498.2M1455.4 163.98H1498.2M1455.4 166.22H1498.2M1455.4 168.46H1498.2M1455.4 170.70H1498.2"/><path stroke="#555" stroke-width="0.5" fill="none" d="M1457.05 112.5V170.7M1460.34 112.5V170.7M1463.63 112.5V170.7M1466.92 112.5V170.7M1470.22 112.5V170.7M1473.51 112.5V170.7M1476.80 112.5V170.7M1480.09 112.5V170.7M1483.38 112.5V170.7M1486.68 112.5V170.7M1489.97 112.5V170.7M1493.26 112.5V170.7M1496.55 112.5V170.7"/><rect x="1455.4" y="112.5" width="42.8" height="58.2" rx="1.2" fill="none" stroke="#2a2a2a" stroke-width="1"/><path fill="none" stroke="#527857" stroke-width="1.4" stroke-linejoin="round" d="M1572.10 141.50L1573.19 142.06L1573.63 142.63L1573.15 143.17L1572.02 143.63L1570.88 144.06L1570.37 144.51L1570.76 145.08L1571.77 145.76L1572.76 146.47L1573.10 147.11L1572.54 147.56L1571.35 147.85L1570.16 148.09L1569.59 148.46L1569.88 149.08L1570.77 149.91L1571.63 150.77L1571.87 151.45L1571.25 151.81L1570.03 151.91L1568.82 151.96L1568.19 152.24L1568.39 152.89L1569.14 153.85L1569.85 154.84L1569.98 155.55L1569.31 155.81L1568.09 155.71L1566.89 155.57L1566.23 155.75L1566.32 156.43L1566.91 157.49L1567.46 158.58L1567.48 159.30L1566.77 159.45L1565.58 159.16L1564.41 158.84L1563.74 158.91L1563.72 159.59L1564.13 160.73L1564.51 161.90L1564.42 162.61L1563.70 162.65L1562.56 162.18L1561.46 161.68L1560.78 161.64L1560.66 162.31L1560.89 163.51L1561.08 164.71L1560.87 165.40L1560.16 165.33L1559.11 164.69L1558.10 164.02L1557.43 163.88L1557.21 164.52L1557.25 165.74L1557.25 166.96L1556.94 167.61L1556.24 167.42L1555.31 166.63L1554.41 165.81L1553.78 165.56L1553.45 166.16L1553.31 167.37L1553.11 168.58L1552.70 169.17L1552.04 168.88L1551.25 167.95L1550.49 167.00L1549.90 166.66L1549.49 167.20L1549.16 168.37L1548.78 169.53L1548.28 170.05L1547.67 169.66L1547.03 168.62L1546.44 167.56L1545.91 167.13L1545.41 167.60L1544.90 168.70L1544.34 169.79L1543.77 170.23L1543.23 169.75L1542.77 168.62L1542.34 167.48L1541.89 166.97L1541.32 167.36L1540.64 168.37L1539.93 169.36L1539.29 169.70L1538.84 169.14L1538.55 167.95L1538.31 166.76L1537.94 166.19L1537.32 166.48L1536.49 167.37L1535.63 168.23L1534.95 168.47L1534.59 167.85L1534.49 166.63L1534.44 165.42L1534.16 164.79L1533.51 164.99L1532.55 165.74L1531.56 166.45L1530.85 166.58L1530.59 165.91L1530.69 164.69L1530.83 163.49L1530.65 162.83L1529.97 162.92L1528.91 163.51L1527.82 164.06L1527.10 164.08L1526.95 163.37L1527.24 162.18L1527.56 161.01L1527.49 160.34L1526.81 160.32L1525.67 160.73L1524.50 161.11L1523.79 161.02L1523.75 160.30L1524.22 159.16L1524.72 158.06L1524.76 157.38L1524.09 157.26L1522.89 157.49L1521.69 157.68L1521.00 157.47L1521.07 156.76L1521.71 155.71L1522.38 154.70L1522.52 154.03L1521.88 153.81L1520.66 153.85L1519.44 153.85L1518.79 153.54L1518.98 152.84L1519.77 151.91L1520.59 151.01L1520.84 150.38L1520.24 150.05L1519.03 149.91L1517.82 149.71L1517.23 149.30L1517.52 148.64L1518.45 147.85L1519.40 147.09L1519.74 146.50L1519.20 146.09L1518.03 145.76L1516.87 145.38L1516.35 144.88L1516.74 144.27L1517.78 143.63L1518.84 143.04L1519.27 142.51L1518.80 142.01L1517.70 141.50L1516.61 140.94L1516.17 140.37L1516.65 139.83L1517.78 139.37L1518.92 138.94L1519.43 138.49L1519.04 137.92L1518.03 137.24L1517.04 136.53L1516.70 135.89L1517.26 135.44L1518.45 135.15L1519.64 134.91L1520.21 134.54L1519.92 133.92L1519.03 133.09L1518.17 132.23L1517.93 131.55L1518.55 131.19L1519.77 131.09L1520.98 131.04L1521.61 130.76L1521.41 130.11L1520.66 129.15L1519.95 128.16L1519.82 127.45L1520.49 127.19L1521.71 127.29L1522.91 127.43L1523.57 127.25L1523.48 126.57L1522.89 125.51L1522.34 124.42L1522.32 123.70L1523.03 123.55L1524.22 123.84L1525.39 124.16L1526.06 124.09L1526.08 123.41L1525.67 122.27L1525.29 121.10L1525.38 120.39L1526.10 120.35L1527.24 120.82L1528.34 121.32L1529.02 121.36L1529.14 120.69L1528.91 119.49L1528.72 118.29L1528.93 117.60L1529.64 117.67L1530.69 118.31L1531.70 118.98L1532.37 119.12L1532.59 118.48L1532.55 117.26L1532.55 116.04L1532.86 115.39L1533.56 115.58L1534.49 116.37L1535.39 117.19L1536.02 117.44L1536.35 116.84L1536.49 115.63L1536.69 114.42L1537.10 113.83L1537.76 114.12L1538.55 115.05L1539.31 116.00L1539.90 116.34L1540.31 115.80L1540.64 114.63L1541.02 113.47L1541.52 112.95L1542.13 113.34L1542.77 114.38L1543.36 115.44L1543.89 115.87L1544.39 115.40L1544.90 114.30L1545.46 113.21L1546.03 112.77L1546.57 113.25L1547.03 114.38L1547.46 115.52L1547.91 116.03L1548.48 115.64L1549.16 114.63L1549.87 113.64L1550.51 113.30L1550.96 113.86L1551.25 115.05L1551.49 116.24L1551.86 116.81L1552.48 116.52L1553.31 115.63L1554.17 114.77L1554.85 114.53L1555.21 115.15L1555.31 116.37L1555.36 117.58L1555.64 118.21L1556.29 118.01L1557.25 117.26L1558.24 116.55L1558.95 116.42L1559.21 117.09L1559.11 118.31L1558.97 119.51L1559.15 120.17L1559.83 120.08L1560.89 119.49L1561.98 118.94L1562.70 118.92L1562.85 119.63L1562.56 120.82L1562.24 121.99L1562.31 122.66L1562.99 122.68L1564.13 122.27L1565.30 121.89L1566.01 121.98L1566.05 122.70L1565.58 123.84L1565.08 124.94L1565.04 125.62L1565.71 125.74L1566.91 125.51L1568.11 125.32L1568.80 125.53L1568.73 126.24L1568.09 127.29L1567.42 128.30L1567.28 128.97L1567.92 129.19L1569.14 129.15L1570.36 129.15L1571.01 129.46L1570.82 130.16L1570.03 131.09L1569.21 131.99L1568.96 132.62L1569.56 132.95L1570.77 133.09L1571.98 133.29L1572.57 133.70L1572.28 134.36L1571.35 135.15L1570.40 135.91L1570.06 136.50L1570.60 136.91L1571.77 137.24L1572.93 137.62L1573.45 138.12L1573.06 138.73L1572.02 139.37L1570.96 139.96L1570.53 140.49L1571.00 140.99L1572.10 141.50Z"/><g fill="#666"><circle cx="1563.10" cy="141.50" r="1.25"/><circle cx="1561.71" cy="148.46" r="1.25"/><circle cx="1557.77" cy="154.37" r="1.25"/><circle cx="1551.86" cy="158.31" r="1.25"/><circle cx="1544.90" cy="159.70" r="1.25"/><circle cx="1537.94" cy="158.31" r="1.25"/><circle cx="1532.03" cy="154.37" r="1.25"/><circle cx="1528.09" cy="148.46" r="1.25"/><circle cx="1526.70" cy="141.50" r="1.25"/><circle cx="1528.09" cy="134.54" r="1.25"/><circle cx="1532.03" cy="128.63" r="1.25"/><circle cx="1537.94" cy="124.69" r="1.25"/><circle cx="1544.90" cy="123.30" r="1.25"/><circle cx="1551.86" cy="124.69" r="1.25"/><circle cx="1557.77" cy="128.63" r="1.25"/><circle cx="1561.71" cy="134.54" r="1.25"/><circle cx="1553.90" cy="141.50" r="1.25"/><circle cx="1551.26" cy="147.86" r="1.25"/><circle cx="1544.90" cy="150.50" r="1.25"/><circle cx="1538.54" cy="147.86" r="1.25"/><circle cx="1535.90" cy="141.50" r="1.25"/><circle cx="1538.54" cy="135.14" r="1.25"/><circle cx="1544.90" cy="132.50" r="1.25"/><circle cx="1551.26" cy="135.14" r="1.25"/></g><g fill="#6a6a6a"><circle cx="1544.90" cy="141.50" r="0.9"/></g><circle fill="#6a6a6a" cx="1544.9" cy="132.5" r="0.75"/><circle fill="#6a6a6a" cx="1544.9" cy="135.5" r="0.75"/><circle fill="#6a6a6a" cx="1544.9" cy="138.5" r="0.75"/><circle fill="#6a6a6a" cx="1544.9" cy="144.5" r="0.75"/><circle fill="#6a6a6a" cx="1544.9" cy="147.5" r="0.75"/><circle fill="#6a6a6a" cx="1544.9" cy="150.5" r="0.75"/><path fill="none" stroke="#666" stroke-width="1.1" stroke-linejoin="round" d="M1404.6 202 L1431.4 214 A6.3 6.3 0 0 1 1431.4 225.8 L1404.6 237.8 A18.7 18.7 0 1 1 1404.6 202Z"/><circle fill="none" stroke="#666" stroke-width="1.1" stroke-linejoin="round" cx="1399.2" cy="205.5" r="1.4"/><circle fill="none" stroke="#666" stroke-width="1.1" stroke-linejoin="round" cx="1389.3" cy="209.6" r="1.4"/><circle fill="none" stroke="#666" stroke-width="1.1" stroke-linejoin="round" cx="1409.3" cy="209.6" r="1.4"/><circle fill="none" stroke="#666" stroke-width="1.1" stroke-linejoin="round" cx="1399.2" cy="212.8" r="1.4"/><circle fill="none" stroke="#666" stroke-width="1.1" stroke-linejoin="round" cx="1385" cy="219.9" r="1.4"/><circle fill="none" stroke="#666" stroke-width="1.1" stroke-linejoin="round" cx="1413.5" cy="219.9" r="1.4"/><circle fill="none" stroke="#666" stroke-width="1.1" stroke-linejoin="round" cx="1427.8" cy="219.9" r="1.4"/><circle fill="none" stroke="#666" stroke-width="1.1" stroke-linejoin="round" cx="1399.2" cy="227" r="1.4"/><circle fill="none" stroke="#666" stroke-width="1.1" stroke-linejoin="round" cx="1389.3" cy="230" r="1.4"/><circle fill="none" stroke="#666" stroke-width="1.1" stroke-linejoin="round" cx="1409.3" cy="230" r="1.4"/><circle fill="none" stroke="#666" stroke-width="1.1" stroke-linejoin="round" cx="1399.2" cy="234.2" r="1.4"/><rect fill="none" stroke="#666" stroke-width="1.1" stroke-linejoin="round" x="1396.4" y="217.8" width="5.6" height="4.2" rx="2"/><rect fill="none" stroke="#666" stroke-width="1.1" stroke-linejoin="round" stroke="#555" x="1447.6" y="213.6" width="19.0" height="12.6" rx="0.8"/><path stroke="#777" stroke-width="0.7" d="M1447.6 215.4H1466.6M1447.6 224.4H1466.6"/><ellipse fill="#808080" cx="1450.8" cy="216.8" rx="2.3" ry="1"/><ellipse fill="#808080" cx="1450.8" cy="223" rx="2.3" ry="1"/><ellipse fill="#808080" cx="1463.3999999999999" cy="216.8" rx="2.3" ry="1"/><ellipse fill="#808080" cx="1463.3999999999999" cy="223" rx="2.3" ry="1"/><rect fill="none" stroke="#666" stroke-width="1.1" stroke-linejoin="round" stroke="#555" x="1468.9" y="213.6" width="36.5" height="12.6" rx="0.8"/><path stroke="#777" stroke-width="0.7" d="M1468.9 215.4H1505.4M1468.9 224.4H1505.4"/><ellipse fill="#808080" cx="1472.1000000000001" cy="216.8" rx="2.3" ry="1"/><ellipse fill="#808080" cx="1472.1000000000001" cy="223" rx="2.3" ry="1"/><ellipse fill="#808080" cx="1502.2" cy="216.8" rx="2.3" ry="1"/><ellipse fill="#808080" cx="1502.2" cy="223" rx="2.3" ry="1"/><rect fill="#111" x="1455" y="219.2" width="3.6" height="1.5"/><rect fill="#111" x="1485.6" y="214.4" width="3.4" height="1.5"/><circle fill="#777" cx="1473.4" cy="218.4" r="0.65"/><circle fill="#777" cx="1476.8" cy="221.6" r="0.65"/><circle fill="#777" cx="1480.2" cy="218.4" r="0.65"/><circle fill="#777" cx="1483.6" cy="221.6" r="0.65"/><circle fill="#777" cx="1487.0" cy="218.4" r="0.65"/><circle fill="#777" cx="1490.4" cy="221.6" r="0.65"/><circle fill="#777" cx="1493.8" cy="218.4" r="0.65"/><circle fill="#777" cx="1497.2" cy="221.6" r="0.65"/><circle fill="#777" cx="1500.6" cy="218.4" r="0.65"/><rect fill="#c4c4c4" stroke="#666" stroke-width="0.9" x="1516" y="206" width="5.6" height="3.4" rx="1.7"/><rect fill="#c4c4c4" stroke="#666" stroke-width="0.9" x="1524" y="206" width="6.5" height="3.4" rx="1.7"/><rect fill="#c4c4c4" stroke="#666" stroke-width="0.9" x="1534.2" y="206" width="7.8" height="3.4" rx="1.7"/><rect fill="#c4c4c4" stroke="#666" stroke-width="0.9" x="1546" y="206" width="10.0" height="3.4" rx="1.7"/><rect fill="#c4c4c4" stroke="#666" stroke-width="0.9" x="1561" y="206" width="13.0" height="3.4" rx="1.7"/><rect fill="#c4c4c4" stroke="#666" stroke-width="0.9" x="1516" y="212" width="14.5" height="3.4" rx="1.7"/><rect fill="#c4c4c4" stroke="#666" stroke-width="0.9" x="1532.4" y="212" width="34.0" height="3.4" rx="1.7"/><rect fill="none" stroke="#666" stroke-width="1.1" stroke-linejoin="round" stroke="#444" x="1568.6" y="211.2" width="5.2" height="5.2" rx="1.2"/><rect fill="#c4c4c4" stroke="#666" stroke-width="0.9" fill="#bbb" x="1516.2" y="219.6" width="5" height="12.8" rx="2.4"/><rect fill="none" stroke="#666" stroke-width="1.1" stroke-linejoin="round" stroke="#444" x="1526.2" y="218.6" width="14.8" height="14.6" rx="1.8"/><path stroke="#aaa" stroke-width="0.5" stroke-dasharray="0.8 0.8" d="M1528 221H1539.6M1528 223H1539.6M1528 229H1539.6M1528 231H1539.6M1528.6 220.4V231.8M1530.6 220.4V231.8M1536.6 220.4V231.8M1538.6 220.4V231.8"/><path fill="none" stroke="#666" stroke-width="1.1" stroke-linejoin="round" d="M1382 293.4 L1388.6 290.2 H1433.6 A0.7 0.7 0 0 1 1434.3 290.9 V295.9 A0.7 0.7 0 0 1 1433.6 296.6 H1388.6 Z"/><path fill="none" stroke="#666" stroke-width="1.1" stroke-linejoin="round" d="M1382 303.2 L1388.6 299.8 H1433.6 A0.7 0.7 0 0 1 1434.3 300.5 V305.9 A0.7 0.7 0 0 1 1433.6 306.6 H1388.6 Z"/><path fill="none" stroke="#4d784f" stroke-width="1.25" stroke-linejoin="round" d="M1472.50 298.30L1473.34 298.71L1473.67 299.14L1473.29 299.53L1472.40 299.83L1471.51 300.07L1471.10 300.35L1471.37 300.76L1472.10 301.33L1472.81 301.94L1473.02 302.45L1472.54 302.72L1471.61 302.78L1470.68 302.78L1470.22 302.94L1470.37 303.42L1470.93 304.15L1471.46 304.93L1471.53 305.47L1471.00 305.61L1470.08 305.42L1469.19 305.18L1468.69 305.22L1468.72 305.72L1469.07 306.57L1469.38 307.46L1469.31 308.00L1468.76 308.00L1467.92 307.58L1467.12 307.12L1466.63 307.03L1466.53 307.52L1466.65 308.43L1466.72 309.37L1466.51 309.87L1465.98 309.73L1465.28 309.11L1464.62 308.46L1464.18 308.24L1463.95 308.68L1463.83 309.60L1463.65 310.52L1463.32 310.95L1462.84 310.68L1462.33 309.90L1461.86 309.10L1461.49 308.78L1461.16 309.15L1460.80 310.00L1460.39 310.84L1459.96 311.17L1459.57 310.79L1459.27 309.90L1459.03 309.01L1458.75 308.60L1458.34 308.87L1457.77 309.60L1457.16 310.31L1456.65 310.52L1456.38 310.04L1456.32 309.11L1456.32 308.18L1456.16 307.72L1455.68 307.87L1454.95 308.43L1454.17 308.96L1453.63 309.03L1453.49 308.50L1453.68 307.58L1453.92 306.69L1453.88 306.19L1453.38 306.22L1452.53 306.57L1451.64 306.88L1451.10 306.81L1451.10 306.26L1451.52 305.42L1451.98 304.62L1452.07 304.13L1451.58 304.03L1450.67 304.15L1449.73 304.22L1449.23 304.01L1449.37 303.48L1449.99 302.78L1450.64 302.12L1450.86 301.68L1450.42 301.45L1449.50 301.33L1448.58 301.15L1448.15 300.82L1448.42 300.34L1449.20 299.83L1450.00 299.36L1450.32 298.99L1449.95 298.66L1449.10 298.30L1448.26 297.89L1447.93 297.46L1448.31 297.07L1449.20 296.77L1450.09 296.53L1450.50 296.25L1450.23 295.84L1449.50 295.27L1448.79 294.66L1448.58 294.15L1449.06 293.88L1449.99 293.82L1450.92 293.82L1451.38 293.66L1451.23 293.18L1450.67 292.45L1450.14 291.67L1450.07 291.13L1450.60 290.99L1451.52 291.18L1452.41 291.42L1452.91 291.38L1452.88 290.88L1452.53 290.03L1452.22 289.14L1452.29 288.60L1452.84 288.60L1453.68 289.02L1454.48 289.48L1454.97 289.57L1455.07 289.08L1454.95 288.17L1454.88 287.23L1455.09 286.73L1455.62 286.87L1456.32 287.49L1456.98 288.14L1457.42 288.36L1457.65 287.92L1457.77 287.00L1457.95 286.08L1458.28 285.65L1458.76 285.92L1459.27 286.70L1459.74 287.50L1460.11 287.82L1460.44 287.45L1460.80 286.60L1461.21 285.76L1461.64 285.43L1462.03 285.81L1462.33 286.70L1462.57 287.59L1462.85 288.00L1463.26 287.73L1463.83 287.00L1464.44 286.29L1464.95 286.08L1465.22 286.56L1465.28 287.49L1465.28 288.42L1465.44 288.88L1465.92 288.73L1466.65 288.17L1467.43 287.64L1467.97 287.57L1468.11 288.10L1467.92 289.02L1467.68 289.91L1467.72 290.41L1468.22 290.38L1469.07 290.03L1469.96 289.72L1470.50 289.79L1470.50 290.34L1470.08 291.18L1469.62 291.98L1469.53 292.47L1470.02 292.57L1470.93 292.45L1471.87 292.38L1472.37 292.59L1472.23 293.12L1471.61 293.82L1470.96 294.48L1470.74 294.92L1471.18 295.15L1472.10 295.27L1473.02 295.45L1473.45 295.78L1473.18 296.26L1472.40 296.77L1471.60 297.24L1471.28 297.61L1471.65 297.94L1472.50 298.30Z"/><g fill="#555"><circle cx="1465.79" cy="300.37" r="0.7"/><circle cx="1462.87" cy="303.29" r="0.7"/><circle cx="1458.73" cy="303.29" r="0.7"/><circle cx="1455.81" cy="300.37" r="0.7"/><circle cx="1455.81" cy="296.23" r="0.7"/><circle cx="1458.73" cy="293.31" r="0.7"/><circle cx="1462.87" cy="293.31" r="0.7"/><circle cx="1465.79" cy="296.23" r="0.7"/></g><path stroke="#555" stroke-width="0.8" stroke-dasharray="1 1.1" d="M1460.8 291.4V305.2"/><circle fill="#555" cx="1460.8" cy="298.3" r="0.9"/><path fill="none" stroke="#4d784f" stroke-width="1.25" stroke-linejoin="round" d="M1503.90 298.30L1504.74 298.71L1505.07 299.14L1504.69 299.53L1503.80 299.83L1502.91 300.07L1502.50 300.35L1502.77 300.76L1503.50 301.33L1504.21 301.94L1504.42 302.45L1503.94 302.72L1503.01 302.78L1502.08 302.78L1501.62 302.94L1501.77 303.42L1502.33 304.15L1502.86 304.93L1502.93 305.47L1502.40 305.61L1501.48 305.42L1500.59 305.18L1500.09 305.22L1500.12 305.72L1500.47 306.57L1500.78 307.46L1500.71 308.00L1500.16 308.00L1499.32 307.58L1498.52 307.12L1498.03 307.03L1497.93 307.52L1498.05 308.43L1498.12 309.37L1497.91 309.87L1497.38 309.73L1496.68 309.11L1496.02 308.46L1495.58 308.24L1495.35 308.68L1495.23 309.60L1495.05 310.52L1494.72 310.95L1494.24 310.68L1493.73 309.90L1493.26 309.10L1492.89 308.78L1492.56 309.15L1492.20 310.00L1491.79 310.84L1491.36 311.17L1490.97 310.79L1490.67 309.90L1490.43 309.01L1490.15 308.60L1489.74 308.87L1489.17 309.60L1488.56 310.31L1488.05 310.52L1487.78 310.04L1487.72 309.11L1487.72 308.18L1487.56 307.72L1487.08 307.87L1486.35 308.43L1485.57 308.96L1485.03 309.03L1484.89 308.50L1485.08 307.58L1485.32 306.69L1485.28 306.19L1484.78 306.22L1483.93 306.57L1483.04 306.88L1482.50 306.81L1482.50 306.26L1482.92 305.42L1483.38 304.62L1483.47 304.13L1482.98 304.03L1482.07 304.15L1481.13 304.22L1480.63 304.01L1480.77 303.48L1481.39 302.78L1482.04 302.12L1482.26 301.68L1481.82 301.45L1480.90 301.33L1479.98 301.15L1479.55 300.82L1479.82 300.34L1480.60 299.83L1481.40 299.36L1481.72 298.99L1481.35 298.66L1480.50 298.30L1479.66 297.89L1479.33 297.46L1479.71 297.07L1480.60 296.77L1481.49 296.53L1481.90 296.25L1481.63 295.84L1480.90 295.27L1480.19 294.66L1479.98 294.15L1480.46 293.88L1481.39 293.82L1482.32 293.82L1482.78 293.66L1482.63 293.18L1482.07 292.45L1481.54 291.67L1481.47 291.13L1482.00 290.99L1482.92 291.18L1483.81 291.42L1484.31 291.38L1484.28 290.88L1483.93 290.03L1483.62 289.14L1483.69 288.60L1484.24 288.60L1485.08 289.02L1485.88 289.48L1486.37 289.57L1486.47 289.08L1486.35 288.17L1486.28 287.23L1486.49 286.73L1487.02 286.87L1487.72 287.49L1488.38 288.14L1488.82 288.36L1489.05 287.92L1489.17 287.00L1489.35 286.08L1489.68 285.65L1490.16 285.92L1490.67 286.70L1491.14 287.50L1491.51 287.82L1491.84 287.45L1492.20 286.60L1492.61 285.76L1493.04 285.43L1493.43 285.81L1493.73 286.70L1493.97 287.59L1494.25 288.00L1494.66 287.73L1495.23 287.00L1495.84 286.29L1496.35 286.08L1496.62 286.56L1496.68 287.49L1496.68 288.42L1496.84 288.88L1497.32 288.73L1498.05 288.17L1498.83 287.64L1499.37 287.57L1499.51 288.10L1499.32 289.02L1499.08 289.91L1499.12 290.41L1499.62 290.38L1500.47 290.03L1501.36 289.72L1501.90 289.79L1501.90 290.34L1501.48 291.18L1501.02 291.98L1500.93 292.47L1501.42 292.57L1502.33 292.45L1503.27 292.38L1503.77 292.59L1503.63 293.12L1503.01 293.82L1502.36 294.48L1502.14 294.92L1502.58 295.15L1503.50 295.27L1504.42 295.45L1504.85 295.78L1504.58 296.26L1503.80 296.77L1503.00 297.24L1502.68 297.61L1503.05 297.94L1503.90 298.30Z"/><g fill="#555"><circle cx="1497.19" cy="300.37" r="0.7"/><circle cx="1494.27" cy="303.29" r="0.7"/><circle cx="1490.13" cy="303.29" r="0.7"/><circle cx="1487.21" cy="300.37" r="0.7"/><circle cx="1487.21" cy="296.23" r="0.7"/><circle cx="1490.13" cy="293.31" r="0.7"/><circle cx="1494.27" cy="293.31" r="0.7"/><circle cx="1497.19" cy="296.23" r="0.7"/></g><path stroke="#555" stroke-width="0.8" stroke-dasharray="1 1.1" d="M1492.2 291.4V305.2"/><circle fill="#555" cx="1492.2" cy="298.3" r="0.9"/><path fill="none" stroke="#4d784f" stroke-width="1.15" stroke-linejoin="round" d="M1532.20 298.30L1533.07 298.79L1533.39 299.32L1532.95 299.76L1531.99 300.02L1531.03 300.18L1530.56 300.41L1530.76 300.89L1531.38 301.65L1531.92 302.48L1531.95 303.10L1531.36 303.29L1530.39 303.07L1529.47 302.77L1528.95 302.75L1528.90 303.27L1529.09 304.23L1529.18 305.22L1528.93 305.78L1528.32 305.67L1527.55 305.03L1526.88 304.33L1526.42 304.08L1526.14 304.51L1525.87 305.45L1525.49 306.37L1525.00 306.75L1524.51 306.37L1524.13 305.45L1523.86 304.51L1523.58 304.08L1523.12 304.33L1522.45 305.03L1521.68 305.67L1521.07 305.78L1520.82 305.22L1520.91 304.23L1521.10 303.27L1521.05 302.75L1520.53 302.77L1519.61 303.07L1518.64 303.29L1518.05 303.10L1518.08 302.48L1518.62 301.65L1519.24 300.89L1519.44 300.41L1518.97 300.18L1518.01 300.02L1517.05 299.76L1516.61 299.32L1516.93 298.79L1517.80 298.30L1518.70 297.92L1519.09 297.58L1518.79 297.16L1518.01 296.58L1517.28 295.90L1517.10 295.30L1517.63 294.98L1518.62 294.95L1519.59 295.03L1520.10 294.92L1520.03 294.40L1519.61 293.53L1519.28 292.58L1519.40 291.98L1520.01 291.94L1520.91 292.37L1521.73 292.89L1522.23 293.03L1522.41 292.54L1522.45 291.57L1522.60 290.58L1522.98 290.10L1523.54 290.35L1524.13 291.15L1524.62 292.00L1525.00 292.35L1525.38 292.00L1525.87 291.15L1526.46 290.35L1527.02 290.10L1527.40 290.58L1527.55 291.57L1527.59 292.54L1527.77 293.03L1528.27 292.89L1529.09 292.37L1529.99 291.94L1530.60 291.98L1530.72 292.58L1530.39 293.53L1529.97 294.40L1529.90 294.92L1530.41 295.03L1531.38 294.95L1532.37 294.98L1532.90 295.30L1532.72 295.90L1531.99 296.58L1531.21 297.16L1530.91 297.58L1531.30 297.92L1532.20 298.30Z"/><path fill="none" stroke="#4d784f" stroke-width="1.15" stroke-linejoin="round" d="M1552.60 298.30L1553.47 298.79L1553.79 299.32L1553.35 299.76L1552.39 300.02L1551.43 300.18L1550.96 300.41L1551.16 300.89L1551.78 301.65L1552.32 302.48L1552.35 303.10L1551.76 303.29L1550.79 303.07L1549.87 302.77L1549.35 302.75L1549.30 303.27L1549.49 304.23L1549.58 305.22L1549.33 305.78L1548.72 305.67L1547.95 305.03L1547.28 304.33L1546.82 304.08L1546.54 304.51L1546.27 305.45L1545.89 306.37L1545.40 306.75L1544.91 306.37L1544.53 305.45L1544.26 304.51L1543.98 304.08L1543.52 304.33L1542.85 305.03L1542.08 305.67L1541.47 305.78L1541.22 305.22L1541.31 304.23L1541.50 303.27L1541.45 302.75L1540.93 302.77L1540.01 303.07L1539.04 303.29L1538.45 303.10L1538.48 302.48L1539.02 301.65L1539.64 300.89L1539.84 300.41L1539.37 300.18L1538.41 300.02L1537.45 299.76L1537.01 299.32L1537.33 298.79L1538.20 298.30L1539.10 297.92L1539.49 297.58L1539.19 297.16L1538.41 296.58L1537.68 295.90L1537.50 295.30L1538.03 294.98L1539.02 294.95L1539.99 295.03L1540.50 294.92L1540.43 294.40L1540.01 293.53L1539.68 292.58L1539.80 291.98L1540.41 291.94L1541.31 292.37L1542.13 292.89L1542.63 293.03L1542.81 292.54L1542.85 291.57L1543.00 290.58L1543.38 290.10L1543.94 290.35L1544.53 291.15L1545.02 292.00L1545.40 292.35L1545.78 292.00L1546.27 291.15L1546.86 290.35L1547.42 290.10L1547.80 290.58L1547.95 291.57L1547.99 292.54L1548.17 293.03L1548.67 292.89L1549.49 292.37L1550.39 291.94L1551.00 291.98L1551.12 292.58L1550.79 293.53L1550.37 294.40L1550.30 294.92L1550.81 295.03L1551.78 294.95L1552.77 294.98L1553.30 295.30L1553.12 295.90L1552.39 296.58L1551.61 297.16L1551.31 297.58L1551.70 297.92L1552.60 298.30Z"/><path fill="none" stroke="#4d784f" stroke-width="1.15" stroke-linejoin="round" d="M1572.00 298.30L1572.87 298.79L1573.19 299.32L1572.75 299.76L1571.79 300.02L1570.83 300.18L1570.36 300.41L1570.56 300.89L1571.18 301.65L1571.72 302.48L1571.75 303.10L1571.16 303.29L1570.19 303.07L1569.27 302.77L1568.75 302.75L1568.70 303.27L1568.89 304.23L1568.98 305.22L1568.73 305.78L1568.12 305.67L1567.35 305.03L1566.68 304.33L1566.22 304.08L1565.94 304.51L1565.67 305.45L1565.29 306.37L1564.80 306.75L1564.31 306.37L1563.93 305.45L1563.66 304.51L1563.38 304.08L1562.92 304.33L1562.25 305.03L1561.48 305.67L1560.87 305.78L1560.62 305.22L1560.71 304.23L1560.90 303.27L1560.85 302.75L1560.33 302.77L1559.41 303.07L1558.44 303.29L1557.85 303.10L1557.88 302.48L1558.42 301.65L1559.04 300.89L1559.24 300.41L1558.77 300.18L1557.81 300.02L1556.85 299.76L1556.41 299.32L1556.73 298.79L1557.60 298.30L1558.50 297.92L1558.89 297.58L1558.59 297.16L1557.81 296.58L1557.08 295.90L1556.90 295.30L1557.43 294.98L1558.42 294.95L1559.39 295.03L1559.90 294.92L1559.83 294.40L1559.41 293.53L1559.08 292.58L1559.20 291.98L1559.81 291.94L1560.71 292.37L1561.53 292.89L1562.03 293.03L1562.21 292.54L1562.25 291.57L1562.40 290.58L1562.78 290.10L1563.34 290.35L1563.93 291.15L1564.42 292.00L1564.80 292.35L1565.18 292.00L1565.67 291.15L1566.26 290.35L1566.82 290.10L1567.20 290.58L1567.35 291.57L1567.39 292.54L1567.57 293.03L1568.07 292.89L1568.89 292.37L1569.79 291.94L1570.40 291.98L1570.52 292.58L1570.19 293.53L1569.77 294.40L1569.70 294.92L1570.21 295.03L1571.18 294.95L1572.17 294.98L1572.70 295.30L1572.52 295.90L1571.79 296.58L1571.01 297.16L1570.71 297.58L1571.10 297.92L1572.00 298.30Z"/><path stroke="#555" stroke-width="0.8" stroke-dasharray="0.9 1.1" d="M1522 298.3H1528.4"/><path stroke="#555" stroke-width="0.8" stroke-dasharray="0.9 1.1" d="M1545.4 294.6V302.4M1564.8 294.6V302.4"/><path fill="none" stroke="#666" stroke-width="1.1" stroke-linejoin="round" d="M1385.6 366 H1406.6 A5.6 5.6 0 0 1 1412.2 371.6 V381.4 A5.6 5.6 0 0 1 1401 381.4 V378.6 A2 2 0 0 0 1399 376.6 H1385.6 A5.3 5.3 0 0 1 1385.6 366Z"/><path fill="none" stroke="#666" stroke-width="1.1" stroke-linejoin="round" d="M1420.6 366 H1431 A5.3 5.3 0 0 1 1431 376.6 H1428.2 A2 2 0 0 0 1426.2 378.6 V381.4 A5.6 5.6 0 0 1 1415 381.4 V371.6 A5.6 5.6 0 0 1 1420.6 366Z"/><circle fill="#777" cx="1385.8" cy="371.3" r="1.1"/><circle fill="#777" cx="1396.2" cy="371.3" r="1.1"/><circle fill="#777" cx="1406.6" cy="371.3" r="1.1"/><circle fill="#777" cx="1406.6" cy="381.6" r="1.1"/><circle fill="#777" cx="1420.4" cy="371.3" r="1.1"/><circle fill="#777" cx="1430.8" cy="371.3" r="1.1"/><circle fill="#777" cx="1420.4" cy="381.6" r="1.1"/><rect fill="none" stroke="#666" stroke-width="1.1" stroke-linejoin="round" stroke="#555" x="1447.8" y="373.4" width="57.8" height="6.4" rx="3.2"/><rect fill="#3a2a26" x="1455.2" y="375" width="43.4" height="3.3"/><path stroke="#c9806c" stroke-width="0.9" stroke-dasharray="1 1.4" d="M1456 376H1498"/><path stroke="#e8e8e8" stroke-width="0.7" stroke-dasharray="1.2 1.6" d="M1457 377.6H1497"/><circle fill="#777" cx="1451.4" cy="376.6" r="0.7"/><circle fill="#777" cx="1502" cy="376.6" r="0.7"/><path fill="none" stroke="#666" stroke-width="1.1" stroke-linejoin="round" d="M1527.6 354.4 H1544.8 V352.2 A0.6 0.6 0 0 1 1545.4 351.6 H1552.6 A0.6 0.6 0 0 1 1553.2 352.2 V354.4 H1562.4 A0.6 0.6 0 0 1 1563 355.0 V362.0 A0.6 0.6 0 0 1 1562.4 362.6 H1553.2 V364.8 A0.6 0.6 0 0 1 1552.6 365.4 H1545.4 A0.6 0.6 0 0 1 1544.8 364.8 V362.6 H1527.6 A0.6 0.6 0 0 1 1527 362.0 V355.0 A0.6 0.6 0 0 1 1527.6 354.4Z"/><path fill="none" stroke="#666" stroke-width="1.1" stroke-linejoin="round" d="M1527.6 390.2 H1544.8 V388.0 A0.6 0.6 0 0 1 1545.4 387.4 H1552.6 A0.6 0.6 0 0 1 1553.2 388.0 V390.2 H1562.4 A0.6 0.6 0 0 1 1563 390.8 V397.8 A0.6 0.6 0 0 1 1562.4 398.4 H1553.2 V400.6 A0.6 0.6 0 0 1 1552.6 401.2 H1545.4 A0.6 0.6 0 0 1 1544.8 400.6 V398.4 H1527.6 A0.6 0.6 0 0 1 1527 397.8 V390.8 A0.6 0.6 0 0 1 1527.6 390.2Z"/><path stroke="#eee" stroke-width="0.6" d="M1516 405.4H1574"/></svg><span class="tx" style="left:1387.37px;top:174.90px;width:42.45px;height:12.02px;font-size:8.9px;color:#111;font-weight:700">120度拐条</span><span class="tx" style="left:1446.00px;top:174.90px;width:61.61px;height:12.02px;font-size:8.9px;color:#111;font-weight:700">18x13基本单元</span><span class="tx" style="left:1531.85px;top:174.90px;width:26.70px;height:12.02px;font-size:8.9px;color:#111;font-weight:700">大齿轮</span><span class="tx" style="left:1399.70px;top:253.10px;width:17.80px;height:12.02px;font-size:8.9px;color:#111;font-weight:700">凸轮</span><span class="tx" style="left:1463.45px;top:253.10px;width:26.70px;height:12.02px;font-size:8.9px;color:#111;font-weight:700">连接片</span><span class="tx" style="left:1527.40px;top:253.10px;width:35.60px;height:12.02px;font-size:8.9px;color:#111;font-weight:700">连杆集合</span><span class="tx" style="left:1378.42px;top:331.30px;width:59.36px;height:12.02px;font-size:8.9px;color:#111;font-weight:700">M3 一字螺丝刀</span><span class="tx" style="left:1463.45px;top:331.30px;width:26.70px;height:12.02px;font-size:8.9px;color:#111;font-weight:700">中齿轮</span><span class="tx" style="left:1531.85px;top:331.30px;width:26.70px;height:12.02px;font-size:8.9px;color:#111;font-weight:700">小齿轮</span><span class="tx" style="left:1390.80px;top:409.70px;width:35.60px;height:12.02px;font-size:8.9px;color:#111;font-weight:700">直角拐条</span><span class="tx" style="left:1467.50px;top:409.70px;width:17.80px;height:12.02px;font-size:8.9px;color:#111;font-weight:700">尺子</span><span class="tx" style="left:1522.27px;top:409.70px;width:45.85px;height:12.02px;font-size:8.9px;color:#111;font-weight:700">螺丝槽位x2</span>
<div id="rp2"></div><div id="thead"></div><div id="row1"></div>
<span class="tx" style="left:1379.40px;top:461.60px;width:48.80px;height:16.47px;font-size:12.2px;color:#fff">加工工艺</span>
<span class="tx" style="left:1452.00px;top:461.60px;width:24.40px;height:16.47px;font-size:12.2px;color:#fff">速度</span>
<span class="tx" style="left:1509.00px;top:461.60px;width:24.40px;height:16.47px;font-size:12.2px;color:#fff">功率</span>
<span class="tx" style="left:1557.80px;top:461.60px;width:24.40px;height:16.47px;font-size:12.2px;color:#fff">输出</span>
<div class="csw" style="top:495.0px;background:#000"></div>
<span class="tx" style="left:1399.60px;top:494.80px;width:24.40px;height:16.47px;font-size:12.2px;color:#111">切割</span>
<span class="num" style="left:1464.4px;top:496.8px;color:#6a6a6a;-webkit-text-stroke:0.2px #6a6a6a">40.0</span><span class="num" style="left:1520.8px;top:496.8px;color:#6a6a6a;-webkit-text-stroke:0.2px #6a6a6a">99.0</span>
<svg class="i" style="left:1560px;top:494.4px" width="22" height="16" viewBox="-11 -8 22 16"><path fill="none" stroke="#111" stroke-width="1.4" stroke-linejoin="round" d="M-9.2 0C-6.6 -4 -3.4 -6 0 -6C3.4 -6 6.6 -4 9.2 0C6.6 4 3.4 6 0 6C-3.4 6 -6.6 4 -9.2 0Z"/><circle fill="none" stroke="#111" stroke-width="1.4" cx="0" cy="0" r="3.7"/></svg>
<div class="csw" style="top:528.3px;background:#000"></div>
<span class="tx" style="left:1399.60px;top:528.08px;width:24.40px;height:16.47px;font-size:12.2px;color:#111">图片</span>
<span class="num" style="left:1464.4px;top:530.1px;">500.0</span><span class="num" style="left:1520.8px;top:530.1px;">20.0</span>
<svg class="i" style="left:1560px;top:527.7px" width="22" height="16" viewBox="-11 -8 22 16"><path fill="none" stroke="#111" stroke-width="1.4" stroke-linejoin="round" d="M-9.2 0C-6.6 -4 -3.4 -6 0 -6C3.4 -6 6.6 -4 9.2 0C6.6 4 3.4 6 0 6C-3.4 6 -6.6 4 -9.2 0Z"/><circle fill="none" stroke="#111" stroke-width="1.4" cx="0" cy="0" r="3.7"/></svg>
<div class="csw" style="top:561.6px;background:#ffa810"></div>
<span class="tx" style="left:1399.60px;top:561.36px;width:24.40px;height:16.47px;font-size:12.2px;color:#111">图片</span>
<span class="num" style="left:1464.4px;top:563.4px;">500.0</span><span class="num" style="left:1520.8px;top:563.4px;">60.0</span>
<svg class="i" style="left:1560px;top:561.0px" width="22" height="16" viewBox="-11 -8 22 16"><path fill="none" stroke="#111" stroke-width="1.4" stroke-linejoin="round" d="M-9.2 0C-6.6 -4 -3.4 -6 0 -6C3.4 -6 6.6 -4 9.2 0C6.6 4 3.4 6 0 6C-3.4 6 -6.6 4 -9.2 0Z"/><circle fill="none" stroke="#111" stroke-width="1.4" cx="0" cy="0" r="3.7"/></svg>
<div class="csw" style="top:594.8px;background:#78f8ff"></div>
<span class="tx" style="left:1399.60px;top:594.64px;width:24.40px;height:16.47px;font-size:12.2px;color:#111">图片</span>
<span class="num" style="left:1464.4px;top:596.6px;">500.0</span><span class="num" style="left:1520.8px;top:596.6px;">20.0</span>
<svg class="i" style="left:1560px;top:594.2px" width="22" height="16" viewBox="-11 -8 22 16"><path fill="none" stroke="#111" stroke-width="1.4" stroke-linejoin="round" d="M-9.2 0C-6.6 -4 -3.4 -6 0 -6C3.4 -6 6.6 -4 9.2 0C6.6 4 3.4 6 0 6C-3.4 6 -6.6 4 -9.2 0Z"/><circle fill="none" stroke="#111" stroke-width="1.4" cx="0" cy="0" r="3.7"/></svg>
<div class="csw" style="top:628.1px;background:#e2443c"></div>
<span class="tx" style="left:1399.60px;top:627.92px;width:24.40px;height:16.47px;font-size:12.2px;color:#111">描线</span>
<span class="num" style="left:1464.4px;top:629.9px;">100.0</span><span class="num" style="left:1520.8px;top:629.9px;">15.0</span>
<svg class="i" style="left:1560px;top:627.5px" width="22" height="16" viewBox="-11 -8 22 16"><path fill="none" stroke="#111" stroke-width="1.4" stroke-linejoin="round" d="M-9.2 0C-6.6 -4 -3.4 -6 0 -6C3.4 -6 6.6 -4 9.2 0C6.6 4 3.4 6 0 6C-3.4 6 -6.6 4 -9.2 0Z"/><circle fill="none" stroke="#111" stroke-width="1.4" cx="0" cy="0" r="3.7"/></svg>
<div style="left:1426.4px;top:695px;width:107.2px;height:107.2px;border-radius:50%;border:3.5px solid #057ec9;background:#fff"></div>
<div style="left:1433.8px;top:702.4px;width:92.4px;height:92.4px;border-radius:50%;background:#057ec9"></div>
<span class="tx" style="left:1456.20px;top:734.00px;width:47.20px;height:31.86px;font-size:23.6px;color:#fff;font-weight:700">开始</span>
<div id="statusbar"></div><div id="statusin"></div>
<svg class="i" style="left:1428px;top:822px" width="16" height="16" viewBox="-8 -8 16 16"><circle fill="none" stroke="#e8913c" stroke-width="1.3" cx="0" cy="0.4" r="5.8"/><path stroke="#e8913c" stroke-width="1.3" d="M-2.4 -2L2.4 2.8M2.4 -2L-2.4 2.8"/></svg>
<span class="tx" style="left:1447.80px;top:821.80px;width:36.60px;height:16.47px;font-size:12.2px;color:#e8913c">未连接</span>
<span class="tx" style="left:1551.80px;top:822.00px;width:24.40px;height:16.47px;font-size:12.2px;color:#111">切换</span>
</body></html>
